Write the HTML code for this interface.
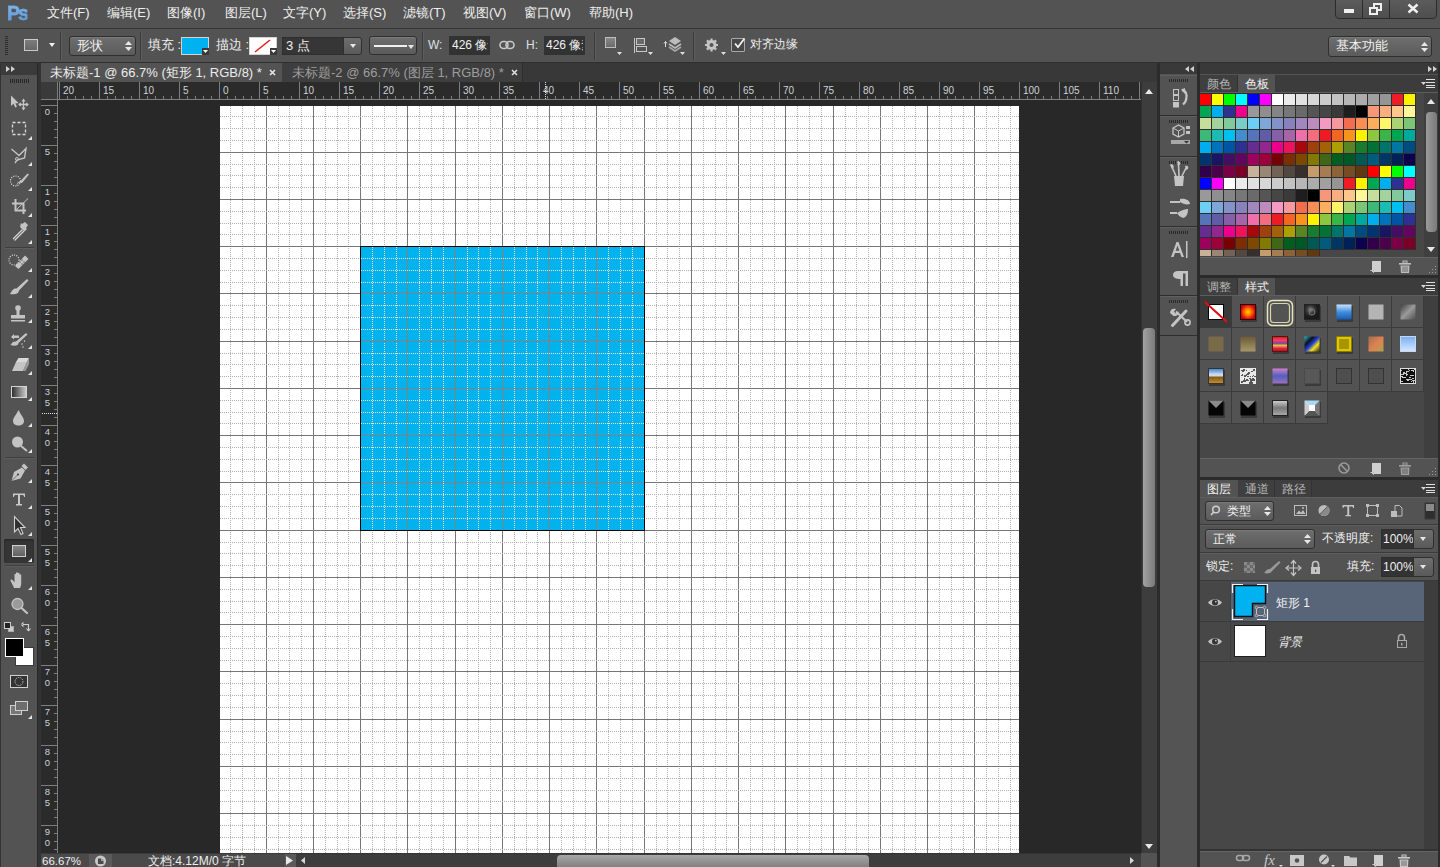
<!DOCTYPE html>
<html><head><meta charset="utf-8"><style>
*{margin:0;padding:0;box-sizing:border-box}
html,body{width:1440px;height:867px;overflow:hidden;background:#535353;font-family:"Liberation Sans",sans-serif;font-size:12px;color:#e6e6e6}
.a{position:absolute}
.t{position:absolute;white-space:nowrap;line-height:1}
svg{position:absolute;overflow:visible}
</style></head><body>
<div class="a" style="left:0px;top:0px;width:1440px;height:28px;background:#535353"></div>
<div class="a" style="left:0px;top:28px;width:1440px;height:1px;background:#343434"></div>
<div class="a" style="left:0px;top:29px;width:1440px;height:33px;background:#535353"></div>
<div class="a" style="left:0px;top:62px;width:1440px;height:1px;background:#2f2f2f"></div>
<div class="t" style="left:7px;top:1px;font:bold 21px 'Liberation Sans',sans-serif;letter-spacing:-2px;transform:scaleX(0.92);transform-origin:left;-webkit-text-stroke:0.5px #6aa2da;color:#6ba3d8;background:linear-gradient(#8cc0f0,#4f8fcf);-webkit-background-clip:text;color:transparent">Ps</div>
<div class="t" style="left:47px;top:6px;font-size:13px;color:#efefef">文件(F)</div>
<div class="t" style="left:107px;top:6px;font-size:13px;color:#efefef">编辑(E)</div>
<div class="t" style="left:167px;top:6px;font-size:13px;color:#efefef">图像(I)</div>
<div class="t" style="left:225px;top:6px;font-size:13px;color:#efefef">图层(L)</div>
<div class="t" style="left:283px;top:6px;font-size:13px;color:#efefef">文字(Y)</div>
<div class="t" style="left:343px;top:6px;font-size:13px;color:#efefef">选择(S)</div>
<div class="t" style="left:403px;top:6px;font-size:13px;color:#efefef">滤镜(T)</div>
<div class="t" style="left:463px;top:6px;font-size:13px;color:#efefef">视图(V)</div>
<div class="t" style="left:524px;top:6px;font-size:13px;color:#efefef">窗口(W)</div>
<div class="t" style="left:589px;top:6px;font-size:13px;color:#efefef">帮助(H)</div>
<div class="a" style="left:1335px;top:-3px;width:102px;height:22px;background:linear-gradient(#5d5d5d,#4e4e4e);border:1px solid #2c2c2c;border-radius:0 0 4px 4px;box-shadow:inset 0 1px 0 #6a6a6a"></div>
<div class="a" style="left:1362px;top:0px;width:1px;height:18px;background:#2c2c2c"></div>
<div class="a" style="left:1389px;top:0px;width:1px;height:18px;background:#2c2c2c"></div>
<div class="a" style="left:1344px;top:9px;width:10px;height:4px;background:#f0f0f0"></div>
<svg style="left:1369px;top:3px" width="14" height="12"><rect x="5" y="1" width="7" height="6" fill="none" stroke="#f0f0f0" stroke-width="2"/><rect x="1" y="5" width="7" height="6" fill="#565656" stroke="#f0f0f0" stroke-width="2"/></svg>
<svg style="left:1407px;top:3px" width="12" height="11"><path d="M1.5 1.5L10.5 9.5M10.5 1.5L1.5 9.5" stroke="#f0f0f0" stroke-width="2.4"/></svg>
<div class="a" style="left:5px;top:36px;width:3px;height:1px;background:#2e2e2e"></div>
<div class="a" style="left:5px;top:38px;width:3px;height:1px;background:#2e2e2e"></div>
<div class="a" style="left:5px;top:40px;width:3px;height:1px;background:#2e2e2e"></div>
<div class="a" style="left:5px;top:42px;width:3px;height:1px;background:#2e2e2e"></div>
<div class="a" style="left:5px;top:44px;width:3px;height:1px;background:#2e2e2e"></div>
<div class="a" style="left:5px;top:46px;width:3px;height:1px;background:#2e2e2e"></div>
<div class="a" style="left:5px;top:48px;width:3px;height:1px;background:#2e2e2e"></div>
<div class="a" style="left:5px;top:50px;width:3px;height:1px;background:#2e2e2e"></div>
<div class="a" style="left:5px;top:52px;width:3px;height:1px;background:#2e2e2e"></div>
<div class="a" style="left:5px;top:54px;width:3px;height:1px;background:#2e2e2e"></div>
<div class="a" style="left:24px;top:39px;width:14px;height:12px;background:linear-gradient(#7c7c7c,#676767);border:1px solid #c9c9c9"></div>
<svg style="left:49px;top:43px" width="6" height="4"><path d="M0 0H6L3 4Z" fill="#f0f0f0"/></svg>
<div class="a" style="left:60px;top:32px;width:1px;height:28px;background:#3a3a3a"></div>
<div class="a" style="left:61px;top:32px;width:1px;height:28px;background:#5e5e5e"></div>
<div class="a" style="left:140px;top:32px;width:1px;height:28px;background:#3a3a3a"></div>
<div class="a" style="left:141px;top:32px;width:1px;height:28px;background:#5e5e5e"></div>
<div class="a" style="left:422px;top:32px;width:1px;height:28px;background:#3a3a3a"></div>
<div class="a" style="left:423px;top:32px;width:1px;height:28px;background:#5e5e5e"></div>
<div class="a" style="left:594px;top:32px;width:1px;height:28px;background:#3a3a3a"></div>
<div class="a" style="left:595px;top:32px;width:1px;height:28px;background:#5e5e5e"></div>
<div class="a" style="left:693px;top:32px;width:1px;height:28px;background:#3a3a3a"></div>
<div class="a" style="left:694px;top:32px;width:1px;height:28px;background:#5e5e5e"></div>
<div class="a" style="left:69px;top:36px;width:67px;height:20px;background:linear-gradient(#6e6e6e,#5b5b5b);border:1px solid #2f2f2f;border-radius:3px;box-shadow:inset 0 1px 0 #7a7a7a"></div>
<div class="t" style="left:77px;top:38.5px;font-size:13px;color:#f2f2f2">形状</div>
<svg style="left:125px;top:41px" width="7" height="10"><path d="M0 4H7L3.5 0Z M0 6H7L3.5 10Z" fill="#e8e8e8"/></svg>
<div class="t" style="left:148px;top:38px;font-size:13px;color:#efefef">填充 :</div>
<div class="a" style="left:181px;top:37px;width:28px;height:18px;background:#00b2ef;border:1px solid #d4d4d4"></div>
<svg style="left:202px;top:48px" width="7" height="7"><rect width="7" height="7" fill="#3a3a3a"/><path d="M1 2H6L3.5 5Z" fill="#fff"/></svg>
<div class="t" style="left:216px;top:38px;font-size:13px;color:#efefef">描边 :</div>
<div class="a" style="left:249px;top:37px;width:28px;height:18px;background:#fff;border:1px solid #d4d4d4"></div>
<svg style="left:249px;top:37px" width="28" height="18"><path d="M6 15L21 3" stroke="#e02020" stroke-width="1.6"/><rect x="21" y="11" width="7" height="7" fill="#3a3a3a"/><path d="M22 13H27L24.5 16Z" fill="#fff"/></svg>
<div class="a" style="left:282px;top:37px;width:62px;height:18px;background:#363636;border:1px solid #2e2e2e"></div>
<div class="t" style="left:286px;top:38.5px;font-size:13px;color:#efefef">3 点</div>
<div class="a" style="left:343px;top:37px;width:19px;height:18px;background:linear-gradient(#6e6e6e,#5a5a5a);border:1px solid #2f2f2f;border-radius:0 3px 3px 0"></div>
<svg style="left:350px;top:44px" width="6" height="4"><path d="M0 0H6L3 4Z" fill="#e8e8e8"/></svg>
<div class="a" style="left:369px;top:36px;width:48px;height:19px;background:linear-gradient(#6e6e6e,#5b5b5b);border:1px solid #2f2f2f;border-radius:3px;box-shadow:inset 0 1px 0 #7a7a7a"></div>
<div class="a" style="left:374px;top:45px;width:33px;height:2px;background:#f0f0f0"></div>
<svg style="left:408px;top:45px" width="6" height="4"><path d="M0 0H6L3 4Z" fill="#e8e8e8"/></svg>
<div class="t" style="left:428px;top:39px;font-size:12px;color:#d8e0e8">W:</div>
<div class="a" style="left:449px;top:36px;width:41px;height:19px;background:#323232"></div>
<div class="t" style="left:452px;top:39px;font-size:12px;color:#f0f0f0;width:36px;overflow:hidden">426 像素</div>
<svg style="left:499px;top:40px" width="17" height="10"><rect x="1" y="1.5" width="8" height="7" rx="3.5" fill="none" stroke="#c8c8c8" stroke-width="1.6"/><rect x="7" y="1.5" width="8" height="7" rx="3.5" fill="none" stroke="#c8c8c8" stroke-width="1.6"/></svg>
<div class="t" style="left:526px;top:39px;font-size:12px;color:#d8e0e8">H:</div>
<div class="a" style="left:544px;top:36px;width:41px;height:19px;background:#323232"></div>
<div class="t" style="left:546px;top:39px;font-size:12px;color:#f0f0f0;width:37px;overflow:hidden">426 像素</div>
<div class="a" style="left:605px;top:37px;width:11px;height:11px;background:linear-gradient(#888,#6a6a6a);border:1px solid #bdbdbd"></div>
<svg style="left:617px;top:52px" width="5" height="3"><path d="M0 0H5L2.5 3Z" fill="#e0e0e0"/></svg>
<div class="a" style="left:634px;top:38px;width:1px;height:15px;background:#c8c8c8"></div>
<div class="a" style="left:636px;top:38px;width:9px;height:7px;background:#6a6a6a;border:1px solid #c8c8c8"></div>
<div class="a" style="left:636px;top:46px;width:11px;height:6px;background:#555;border:1px solid #c8c8c8"></div>
<svg style="left:648px;top:52px" width="5" height="3"><path d="M0 0H5L2.5 3Z" fill="#e0e0e0"/></svg>
<svg style="left:663px;top:36px" width="22" height="18"><path d="M2.5 11V6M1 7.5L2.5 5.5L4 7.5" stroke="#ddd" fill="none" stroke-width="1"/><path d="M6 5L12 1L18 5L12 9Z" fill="#bcbcbc"/><path d="M6 8L12 12L18 8" stroke="#bcbcbc" stroke-width="1.6" fill="none"/><path d="M6 11L12 15L18 11" stroke="#a8a8a8" stroke-width="1.6" fill="none"/></svg>
<svg style="left:680px;top:52px" width="5" height="3"><path d="M0 0H5L2.5 3Z" fill="#e0e0e0"/></svg>
<svg style="left:704px;top:38px" width="15" height="14"><g fill="#c4c4c4"><circle cx="7.5" cy="7" r="5"/><g stroke="#c4c4c4" stroke-width="2.2"><path d="M7.5 0.5V13.5M1 7H14M2.9 2.4L12.1 11.6M12.1 2.4L2.9 11.6"/></g></g><circle cx="7.5" cy="7" r="2" fill="#555"/></svg>
<svg style="left:721px;top:52px" width="5" height="3"><path d="M0 0H5L2.5 3Z" fill="#e0e0e0"/></svg>
<div class="a" style="left:731px;top:38px;width:14px;height:14px;background:#484848;border:1px solid #a8a8a8;border-radius:1px"></div>
<svg style="left:733px;top:37px" width="13" height="13"><path d="M2 6.5L5 10L11.5 1.5" stroke="#f0f0f0" stroke-width="1.8" fill="none"/></svg>
<div class="t" style="left:750px;top:38px;font-size:12px;color:#efefef">对齐边缘</div>
<div class="a" style="left:1328px;top:36px;width:104px;height:21px;background:linear-gradient(#6e6e6e,#5b5b5b);border:1px solid #2f2f2f;border-radius:3px;box-shadow:inset 0 1px 0 #7a7a7a"></div>
<div class="t" style="left:1336px;top:38.5px;font-size:13px;color:#f2f2f2">基本功能</div>
<svg style="left:1421px;top:42px" width="7" height="10"><path d="M0 4H7L3.5 0Z M0 6H7L3.5 10Z" fill="#e8e8e8"/></svg>
<div class="a" style="left:0px;top:63px;width:41px;height:804px;background:#333333"></div>
<div class="a" style="left:1px;top:63px;width:36px;height:12px;background:#3b3b3b"></div>
<div class="a" style="left:1px;top:75px;width:36px;height:792px;background:#535353"></div>
<div class="a" style="left:37px;top:63px;width:1px;height:804px;background:#282828"></div>
<svg style="left:6px;top:66px" width="9" height="6"><path d="M0 0L4 3L0 6Z M5 0L9 3L5 6Z" fill="#d0d0d0"/></svg>
<div class="a" style="left:10px;top:79px;width:1px;height:4px;background:#262626"></div>
<div class="a" style="left:12px;top:79px;width:1px;height:4px;background:#262626"></div>
<div class="a" style="left:14px;top:79px;width:1px;height:4px;background:#262626"></div>
<div class="a" style="left:16px;top:79px;width:1px;height:4px;background:#262626"></div>
<div class="a" style="left:18px;top:79px;width:1px;height:4px;background:#262626"></div>
<div class="a" style="left:20px;top:79px;width:1px;height:4px;background:#262626"></div>
<div class="a" style="left:22px;top:79px;width:1px;height:4px;background:#262626"></div>
<div class="a" style="left:24px;top:79px;width:1px;height:4px;background:#262626"></div>
<div class="a" style="left:26px;top:79px;width:1px;height:4px;background:#262626"></div>
<div class="a" style="left:28px;top:79px;width:1px;height:4px;background:#262626"></div>
<svg style="left:0;top:0" width="41" height="867">
<path d="M11 95.5V106L13.5 103.8L15.2 107.5L17 106.7L15.4 103.2H18.8Z" fill="#c4c4c4"/>
<path d="M23.5 100V109M19 104.5H28" stroke="#c4c4c4" stroke-width="1.3"/><path d="M22 101.5L23.5 99.5L25 101.5M22 107.5L23.5 109.5L25 107.5M21 103L19 104.5L21 106M26 103L28 104.5L26 106" stroke="#c4c4c4" fill="none" stroke-width="1.1"/>
<rect x="12.5" y="122.5" width="13" height="12" fill="none" stroke="#dadada" stroke-width="1.3" stroke-dasharray="3 2"/>
<path d="M28 140H32V136Z" fill="#e6e6e6"/>
<path d="M11.5 149L19 155.5L26 148.5L24.5 158L17 160L15 163" fill="none" stroke="#c4c4c4" stroke-width="1.4"/><circle cx="17" cy="159" r="1.5" fill="none" stroke="#c4c4c4"/>
<path d="M28 166H32V162Z" fill="#e6e6e6"/>
<circle cx="15.5" cy="181" r="5" fill="none" stroke="#dddddd" stroke-width="1.2" stroke-dasharray="1 1.3"/><path d="M16 187C17 183 19 182 22 183L29 174.5L27.5 173.5L20.5 181C17.5 181.5 16.5 184 16 187Z" fill="#c4c4c4"/>
<path d="M28 191H32V187Z" fill="#e6e6e6"/>
<path d="M15.5 199V210.5H26M12 203.5H23.5V214" fill="none" stroke="#c4c4c4" stroke-width="2"/><path d="M15.5 210.5L28 198.5" stroke="#c4c4c4" stroke-width="1"/>
<path d="M28 217H32V213Z" fill="#e6e6e6"/>
<path d="M13 239L22.5 229.5M14.5 240.5L24 231" stroke="#d8d8d8" stroke-width="1.2"/><path d="M20 227L24.5 231.5L27 229L26 228L28 225L25 222L22 224L21 223Z" fill="#c4c4c4"/>
<path d="M28 244H32V240Z" fill="#e6e6e6"/>
<rect x="5" y="247" width="29" height="1" fill="#3e3e3e"/><rect x="5" y="248" width="29" height="1" fill="#5d5d5d"/>
<circle cx="14" cy="260" r="5" fill="none" stroke="#dddddd" stroke-width="1.2" stroke-dasharray="1 1.3"/><path d="M15 266L25 255.5L28.5 259L18.5 269Z" fill="#c4c4c4" transform="rotate(0)"/>
<circle cx="20" cy="262" r="0.8" fill="#666"/><circle cx="22" cy="260" r="0.8" fill="#666"/><circle cx="22" cy="264" r="0.8" fill="#666"/><circle cx="24" cy="262" r="0.8" fill="#666"/>
<path d="M28 272H32V268Z" fill="#e6e6e6"/>
<path d="M10 294C12 291 13 288 16.5 288.5L27 279L28.5 280.5L19 290.5C19 293.5 15 295 10 294Z" fill="#c4c4c4"/>
<path d="M28 298H32V294Z" fill="#e6e6e6"/>
<circle cx="18" cy="308" r="2.8" fill="#c4c4c4"/><rect x="16.5" y="309" width="3" height="6" fill="#c4c4c4"/><rect x="11" y="315" width="14" height="3.5" fill="#c4c4c4"/><rect x="11" y="320" width="14" height="1.5" fill="#c4c4c4"/>
<path d="M28 323H32V319Z" fill="#e6e6e6"/>
<path d="M11 337L14 334V335.5H19V338H14V339.5Z" fill="#c4c4c4"/><path d="M10.5 345C12 343 13 341 16 341.5L26 333L27.5 334.5L18.5 343C18.5 345.5 15 346.5 10.5 345Z" fill="#c4c4c4"/><circle cx="22" cy="344" r="0.7" fill="#ddd"/><circle cx="24.5" cy="341" r="0.7" fill="#ddd"/><circle cx="23" cy="347" r="0.7" fill="#ddd"/>
<path d="M28 349H32V345Z" fill="#e6e6e6"/>
<path d="M12 371L16 362H27L23 371Z" fill="#c4c4c4"/><path d="M16 362L18.5 358H29L27 362Z" fill="#d8d8d8"/><path d="M23 371L27 362L29 358V364L25.5 371Z" fill="#9a9a9a"/>
<path d="M28 375H32V371Z" fill="#e6e6e6"/>
<defs><linearGradient id="gr" x1="0" x2="1"><stop offset="0" stop-color="#2a2a2a"/><stop offset="1" stop-color="#d0d0d0"/></linearGradient><linearGradient id="gq" x1="0" x2="0" y1="0" y2="1"><stop offset="0" stop-color="#888"/><stop offset="1" stop-color="#5e5e5e"/></linearGradient></defs>
<rect x="11.5" y="386.5" width="15" height="11" fill="url(#gr)" stroke="#d4d4d4"/>
<path d="M28 401H32V397Z" fill="#e6e6e6"/>
<path d="M18.5 410C16 415 13 418 13 421C13 424 15.5 425.5 18.5 425.5C21.5 425.5 24 424 24 421C24 418 21 415 18.5 410Z" fill="#c4c4c4"/>
<path d="M28 427H32V423Z" fill="#e6e6e6"/>
<circle cx="17.5" cy="442" r="5.5" fill="#c4c4c4"/><path d="M21 446L27 451" stroke="#c4c4c4" stroke-width="2"/>
<path d="M28 453H32V449Z" fill="#e6e6e6"/>
<rect x="5" y="457" width="29" height="1" fill="#3e3e3e"/><rect x="5" y="458" width="29" height="1" fill="#5d5d5d"/>
<path d="M11.5 481L14 472L22 467.5L25 470.5L20.5 478.5Z" fill="#c4c4c4"/><path d="M21.5 466L24 463.5L28 467.5L25.5 470Z" fill="#c4c4c4"/><circle cx="18" cy="474.5" r="1" fill="#333"/><path d="M11.5 481L18 474.5" stroke="#555" stroke-width="0.7"/>
<path d="M28 483H32V479Z" fill="#e6e6e6"/>
<path d="M13 493.5H25V497H24C24 495.5 23.5 495 22 495H20V504H22V505.5H16V504H18V495H16C14.5 495 14 495.5 14 497H13Z" fill="#c8c8c8"/>
<path d="M28 509H32V505Z" fill="#e6e6e6"/>
<path d="M14.5 516.5V532L18 528.5L21 534.5L23 533.5L20.5 527.5H25Z" fill="#2f2f2f" stroke="#cfcfcf" stroke-width="1.1"/>
<path d="M28 536H32V532Z" fill="#e6e6e6"/>
</svg>
<div class="a" style="left:4px;top:539px;width:30px;height:24px;background:#353535;border-radius:2px;box-shadow:inset 0 1px 2px #222"></div>
<svg style="left:0;top:0" width="41" height="867"><rect x="12.5" y="545.5" width="13" height="11" fill="url(#gq)" stroke="#d0d0d0"/><path d="M28 562H32V558Z" fill="#e6e6e6"/><rect x="5" y="565" width="29" height="1" fill="#3e3e3e"/><rect x="5" y="566" width="29" height="1" fill="#5d5d5d"/><path d="M14 588C13 585 11 582 10.5 580.5C10.5 579.5 11.5 579 12.5 580L14.5 582.5V574.5C14.5 573.5 16 573.5 16 574.5V580V573C16 572 17.8 572 17.8 573V580V573.5C17.8 572.5 19.5 572.5 19.5 573.5V580.5V575C19.5 574 21.2 574 21.2 575V583C21.2 585.5 20.5 587 20 588Z" fill="#c4c4c4"/><path d="M28 590H32V586Z" fill="#e6e6e6"/><circle cx="17.5" cy="604" r="5.5" fill="#9a9a9a" stroke="#c4c4c4" stroke-width="1.3"/><path d="M21.5 608L27 613" stroke="#c4c4c4" stroke-width="2.2" stroke-linecap="round"/><rect x="8.5" y="626.5" width="5" height="5" fill="#ccc" stroke="#aaa"/><rect x="4.5" y="622.5" width="6" height="6" fill="#222" stroke="#ccc"/><path d="M23 624.5H28.5V630M21.5 624.5L23.5 622.5M21.5 624.5L23.5 626.5M26.5 628.5L28.5 631M30.5 628.5L28.5 631" fill="none" stroke="#d0d0d0" stroke-width="1.1"/><rect x="15.5" y="647.5" width="18" height="18" fill="#fff" stroke="#3a3a3a"/><rect x="5.5" y="638.5" width="18" height="18" fill="#000" stroke="#fff"/><rect x="10.5" y="675.5" width="17" height="12" fill="#333" stroke="#cfcfcf"/><circle cx="19" cy="681.5" r="4" fill="none" stroke="#e0e0e0" stroke-dasharray="1 1.2"/><rect x="10.5" y="705.5" width="11" height="9" fill="#777" stroke="#d0d0d0"/><rect x="15.5" y="701.5" width="12" height="9" fill="#6e6e6e" stroke="#d0d0d0"/><path d="M28 719H32V715Z" fill="#e6e6e6"/></svg>
<div class="a" style="left:41px;top:63px;width:1116px;height:19px;background:#383838"></div>
<div class="a" style="left:41px;top:63px;width:241px;height:19px;background:#535353"></div>
<div class="a" style="left:282px;top:63px;width:241px;height:19px;background:#3e3e3e;border-right:1px solid #2c2c2c"></div>
<div class="t" style="left:50px;top:66px;font-size:13px;color:#ececec">未标题-1 @ 66.7% (矩形 1, RGB/8) *</div>
<svg style="left:269px;top:69px" width="7" height="7"><path d="M1 1L6 6M6 1L1 6" stroke="#e8e8e8" stroke-width="1.6"/></svg>
<div class="t" style="left:292px;top:66px;font-size:13px;color:#9d9d9d">未标题-2 @ 66.7% (图层 1, RGB/8) *</div>
<svg style="left:511px;top:69px" width="7" height="7"><path d="M1 1L6 6M6 1L1 6" stroke="#e0e0e0" stroke-width="1.6"/></svg>
<div class="a" style="left:41px;top:82px;width:1100px;height:18px;background:#2b2b2b"></div>
<div class="a" style="left:41px;top:100px;width:17px;height:753px;background:#2b2b2b"></div>
<div class="a" style="left:58px;top:100px;width:1083px;height:753px;background:#282828"></div>
<div class="a" style="left:41px;top:82px;width:16px;height:17px;background:#3a3a3a"></div>
<svg style="left:0;top:0" width="1440" height="867" shape-rendering="crispEdges">
<rect x="41" y="99" width="1100" height="1" fill="#7e7e7e"/>
<rect x="57" y="82" width="1" height="771" fill="#7e7e7e"/>
<rect x="59" y="82" width="1" height="17" fill="#7e7e7e"/>
<rect x="67" y="96" width="1" height="3" fill="#7e7e7e"/>
<rect x="75" y="96" width="1" height="3" fill="#7e7e7e"/>
<rect x="83" y="96" width="1" height="3" fill="#7e7e7e"/>
<rect x="91" y="96" width="1" height="3" fill="#7e7e7e"/>
<rect x="99" y="82" width="1" height="17" fill="#7e7e7e"/>
<rect x="107" y="96" width="1" height="3" fill="#7e7e7e"/>
<rect x="115" y="96" width="1" height="3" fill="#7e7e7e"/>
<rect x="123" y="96" width="1" height="3" fill="#7e7e7e"/>
<rect x="131" y="96" width="1" height="3" fill="#7e7e7e"/>
<rect x="139" y="82" width="1" height="17" fill="#7e7e7e"/>
<rect x="147" y="96" width="1" height="3" fill="#7e7e7e"/>
<rect x="155" y="96" width="1" height="3" fill="#7e7e7e"/>
<rect x="163" y="96" width="1" height="3" fill="#7e7e7e"/>
<rect x="171" y="96" width="1" height="3" fill="#7e7e7e"/>
<rect x="179" y="82" width="1" height="17" fill="#7e7e7e"/>
<rect x="187" y="96" width="1" height="3" fill="#7e7e7e"/>
<rect x="195" y="96" width="1" height="3" fill="#7e7e7e"/>
<rect x="203" y="96" width="1" height="3" fill="#7e7e7e"/>
<rect x="211" y="96" width="1" height="3" fill="#7e7e7e"/>
<rect x="219" y="82" width="1" height="17" fill="#7e7e7e"/>
<rect x="227" y="96" width="1" height="3" fill="#7e7e7e"/>
<rect x="235" y="96" width="1" height="3" fill="#7e7e7e"/>
<rect x="243" y="96" width="1" height="3" fill="#7e7e7e"/>
<rect x="251" y="96" width="1" height="3" fill="#7e7e7e"/>
<rect x="259" y="82" width="1" height="17" fill="#7e7e7e"/>
<rect x="267" y="96" width="1" height="3" fill="#7e7e7e"/>
<rect x="275" y="96" width="1" height="3" fill="#7e7e7e"/>
<rect x="283" y="96" width="1" height="3" fill="#7e7e7e"/>
<rect x="291" y="96" width="1" height="3" fill="#7e7e7e"/>
<rect x="299" y="82" width="1" height="17" fill="#7e7e7e"/>
<rect x="307" y="96" width="1" height="3" fill="#7e7e7e"/>
<rect x="315" y="96" width="1" height="3" fill="#7e7e7e"/>
<rect x="323" y="96" width="1" height="3" fill="#7e7e7e"/>
<rect x="331" y="96" width="1" height="3" fill="#7e7e7e"/>
<rect x="339" y="82" width="1" height="17" fill="#7e7e7e"/>
<rect x="347" y="96" width="1" height="3" fill="#7e7e7e"/>
<rect x="355" y="96" width="1" height="3" fill="#7e7e7e"/>
<rect x="363" y="96" width="1" height="3" fill="#7e7e7e"/>
<rect x="371" y="96" width="1" height="3" fill="#7e7e7e"/>
<rect x="379" y="82" width="1" height="17" fill="#7e7e7e"/>
<rect x="387" y="96" width="1" height="3" fill="#7e7e7e"/>
<rect x="395" y="96" width="1" height="3" fill="#7e7e7e"/>
<rect x="403" y="96" width="1" height="3" fill="#7e7e7e"/>
<rect x="411" y="96" width="1" height="3" fill="#7e7e7e"/>
<rect x="419" y="82" width="1" height="17" fill="#7e7e7e"/>
<rect x="427" y="96" width="1" height="3" fill="#7e7e7e"/>
<rect x="435" y="96" width="1" height="3" fill="#7e7e7e"/>
<rect x="443" y="96" width="1" height="3" fill="#7e7e7e"/>
<rect x="451" y="96" width="1" height="3" fill="#7e7e7e"/>
<rect x="459" y="82" width="1" height="17" fill="#7e7e7e"/>
<rect x="467" y="96" width="1" height="3" fill="#7e7e7e"/>
<rect x="475" y="96" width="1" height="3" fill="#7e7e7e"/>
<rect x="483" y="96" width="1" height="3" fill="#7e7e7e"/>
<rect x="491" y="96" width="1" height="3" fill="#7e7e7e"/>
<rect x="499" y="82" width="1" height="17" fill="#7e7e7e"/>
<rect x="507" y="96" width="1" height="3" fill="#7e7e7e"/>
<rect x="515" y="96" width="1" height="3" fill="#7e7e7e"/>
<rect x="523" y="96" width="1" height="3" fill="#7e7e7e"/>
<rect x="531" y="96" width="1" height="3" fill="#7e7e7e"/>
<rect x="539" y="82" width="1" height="17" fill="#7e7e7e"/>
<rect x="547" y="96" width="1" height="3" fill="#7e7e7e"/>
<rect x="555" y="96" width="1" height="3" fill="#7e7e7e"/>
<rect x="563" y="96" width="1" height="3" fill="#7e7e7e"/>
<rect x="571" y="96" width="1" height="3" fill="#7e7e7e"/>
<rect x="579" y="82" width="1" height="17" fill="#7e7e7e"/>
<rect x="587" y="96" width="1" height="3" fill="#7e7e7e"/>
<rect x="595" y="96" width="1" height="3" fill="#7e7e7e"/>
<rect x="603" y="96" width="1" height="3" fill="#7e7e7e"/>
<rect x="611" y="96" width="1" height="3" fill="#7e7e7e"/>
<rect x="619" y="82" width="1" height="17" fill="#7e7e7e"/>
<rect x="627" y="96" width="1" height="3" fill="#7e7e7e"/>
<rect x="635" y="96" width="1" height="3" fill="#7e7e7e"/>
<rect x="643" y="96" width="1" height="3" fill="#7e7e7e"/>
<rect x="651" y="96" width="1" height="3" fill="#7e7e7e"/>
<rect x="659" y="82" width="1" height="17" fill="#7e7e7e"/>
<rect x="667" y="96" width="1" height="3" fill="#7e7e7e"/>
<rect x="675" y="96" width="1" height="3" fill="#7e7e7e"/>
<rect x="683" y="96" width="1" height="3" fill="#7e7e7e"/>
<rect x="691" y="96" width="1" height="3" fill="#7e7e7e"/>
<rect x="699" y="82" width="1" height="17" fill="#7e7e7e"/>
<rect x="707" y="96" width="1" height="3" fill="#7e7e7e"/>
<rect x="715" y="96" width="1" height="3" fill="#7e7e7e"/>
<rect x="723" y="96" width="1" height="3" fill="#7e7e7e"/>
<rect x="731" y="96" width="1" height="3" fill="#7e7e7e"/>
<rect x="739" y="82" width="1" height="17" fill="#7e7e7e"/>
<rect x="747" y="96" width="1" height="3" fill="#7e7e7e"/>
<rect x="755" y="96" width="1" height="3" fill="#7e7e7e"/>
<rect x="763" y="96" width="1" height="3" fill="#7e7e7e"/>
<rect x="771" y="96" width="1" height="3" fill="#7e7e7e"/>
<rect x="779" y="82" width="1" height="17" fill="#7e7e7e"/>
<rect x="787" y="96" width="1" height="3" fill="#7e7e7e"/>
<rect x="795" y="96" width="1" height="3" fill="#7e7e7e"/>
<rect x="803" y="96" width="1" height="3" fill="#7e7e7e"/>
<rect x="811" y="96" width="1" height="3" fill="#7e7e7e"/>
<rect x="819" y="82" width="1" height="17" fill="#7e7e7e"/>
<rect x="827" y="96" width="1" height="3" fill="#7e7e7e"/>
<rect x="835" y="96" width="1" height="3" fill="#7e7e7e"/>
<rect x="843" y="96" width="1" height="3" fill="#7e7e7e"/>
<rect x="851" y="96" width="1" height="3" fill="#7e7e7e"/>
<rect x="859" y="82" width="1" height="17" fill="#7e7e7e"/>
<rect x="867" y="96" width="1" height="3" fill="#7e7e7e"/>
<rect x="875" y="96" width="1" height="3" fill="#7e7e7e"/>
<rect x="883" y="96" width="1" height="3" fill="#7e7e7e"/>
<rect x="891" y="96" width="1" height="3" fill="#7e7e7e"/>
<rect x="899" y="82" width="1" height="17" fill="#7e7e7e"/>
<rect x="907" y="96" width="1" height="3" fill="#7e7e7e"/>
<rect x="915" y="96" width="1" height="3" fill="#7e7e7e"/>
<rect x="923" y="96" width="1" height="3" fill="#7e7e7e"/>
<rect x="931" y="96" width="1" height="3" fill="#7e7e7e"/>
<rect x="939" y="82" width="1" height="17" fill="#7e7e7e"/>
<rect x="947" y="96" width="1" height="3" fill="#7e7e7e"/>
<rect x="955" y="96" width="1" height="3" fill="#7e7e7e"/>
<rect x="963" y="96" width="1" height="3" fill="#7e7e7e"/>
<rect x="971" y="96" width="1" height="3" fill="#7e7e7e"/>
<rect x="979" y="82" width="1" height="17" fill="#7e7e7e"/>
<rect x="987" y="96" width="1" height="3" fill="#7e7e7e"/>
<rect x="995" y="96" width="1" height="3" fill="#7e7e7e"/>
<rect x="1003" y="96" width="1" height="3" fill="#7e7e7e"/>
<rect x="1011" y="96" width="1" height="3" fill="#7e7e7e"/>
<rect x="1019" y="82" width="1" height="17" fill="#7e7e7e"/>
<rect x="1027" y="96" width="1" height="3" fill="#7e7e7e"/>
<rect x="1035" y="96" width="1" height="3" fill="#7e7e7e"/>
<rect x="1043" y="96" width="1" height="3" fill="#7e7e7e"/>
<rect x="1051" y="96" width="1" height="3" fill="#7e7e7e"/>
<rect x="1059" y="82" width="1" height="17" fill="#7e7e7e"/>
<rect x="1067" y="96" width="1" height="3" fill="#7e7e7e"/>
<rect x="1075" y="96" width="1" height="3" fill="#7e7e7e"/>
<rect x="1083" y="96" width="1" height="3" fill="#7e7e7e"/>
<rect x="1091" y="96" width="1" height="3" fill="#7e7e7e"/>
<rect x="1099" y="82" width="1" height="17" fill="#7e7e7e"/>
<rect x="1107" y="96" width="1" height="3" fill="#7e7e7e"/>
<rect x="1115" y="96" width="1" height="3" fill="#7e7e7e"/>
<rect x="1123" y="96" width="1" height="3" fill="#7e7e7e"/>
<rect x="1131" y="96" width="1" height="3" fill="#7e7e7e"/>
<rect x="1139" y="82" width="1" height="17" fill="#7e7e7e"/>
<rect x="41" y="105" width="16" height="1" fill="#7e7e7e"/>
<rect x="54" y="113" width="3" height="1" fill="#7e7e7e"/>
<rect x="54" y="121" width="3" height="1" fill="#7e7e7e"/>
<rect x="54" y="129" width="3" height="1" fill="#7e7e7e"/>
<rect x="54" y="137" width="3" height="1" fill="#7e7e7e"/>
<rect x="41" y="145" width="16" height="1" fill="#7e7e7e"/>
<rect x="54" y="153" width="3" height="1" fill="#7e7e7e"/>
<rect x="54" y="161" width="3" height="1" fill="#7e7e7e"/>
<rect x="54" y="169" width="3" height="1" fill="#7e7e7e"/>
<rect x="54" y="177" width="3" height="1" fill="#7e7e7e"/>
<rect x="41" y="185" width="16" height="1" fill="#7e7e7e"/>
<rect x="54" y="193" width="3" height="1" fill="#7e7e7e"/>
<rect x="54" y="201" width="3" height="1" fill="#7e7e7e"/>
<rect x="54" y="209" width="3" height="1" fill="#7e7e7e"/>
<rect x="54" y="217" width="3" height="1" fill="#7e7e7e"/>
<rect x="41" y="225" width="16" height="1" fill="#7e7e7e"/>
<rect x="54" y="233" width="3" height="1" fill="#7e7e7e"/>
<rect x="54" y="241" width="3" height="1" fill="#7e7e7e"/>
<rect x="54" y="249" width="3" height="1" fill="#7e7e7e"/>
<rect x="54" y="257" width="3" height="1" fill="#7e7e7e"/>
<rect x="41" y="265" width="16" height="1" fill="#7e7e7e"/>
<rect x="54" y="273" width="3" height="1" fill="#7e7e7e"/>
<rect x="54" y="281" width="3" height="1" fill="#7e7e7e"/>
<rect x="54" y="289" width="3" height="1" fill="#7e7e7e"/>
<rect x="54" y="297" width="3" height="1" fill="#7e7e7e"/>
<rect x="41" y="305" width="16" height="1" fill="#7e7e7e"/>
<rect x="54" y="313" width="3" height="1" fill="#7e7e7e"/>
<rect x="54" y="321" width="3" height="1" fill="#7e7e7e"/>
<rect x="54" y="329" width="3" height="1" fill="#7e7e7e"/>
<rect x="54" y="337" width="3" height="1" fill="#7e7e7e"/>
<rect x="41" y="345" width="16" height="1" fill="#7e7e7e"/>
<rect x="54" y="353" width="3" height="1" fill="#7e7e7e"/>
<rect x="54" y="361" width="3" height="1" fill="#7e7e7e"/>
<rect x="54" y="369" width="3" height="1" fill="#7e7e7e"/>
<rect x="54" y="377" width="3" height="1" fill="#7e7e7e"/>
<rect x="41" y="385" width="16" height="1" fill="#7e7e7e"/>
<rect x="54" y="393" width="3" height="1" fill="#7e7e7e"/>
<rect x="54" y="401" width="3" height="1" fill="#7e7e7e"/>
<rect x="54" y="409" width="3" height="1" fill="#7e7e7e"/>
<rect x="54" y="417" width="3" height="1" fill="#7e7e7e"/>
<rect x="41" y="425" width="16" height="1" fill="#7e7e7e"/>
<rect x="54" y="433" width="3" height="1" fill="#7e7e7e"/>
<rect x="54" y="441" width="3" height="1" fill="#7e7e7e"/>
<rect x="54" y="449" width="3" height="1" fill="#7e7e7e"/>
<rect x="54" y="457" width="3" height="1" fill="#7e7e7e"/>
<rect x="41" y="465" width="16" height="1" fill="#7e7e7e"/>
<rect x="54" y="473" width="3" height="1" fill="#7e7e7e"/>
<rect x="54" y="481" width="3" height="1" fill="#7e7e7e"/>
<rect x="54" y="489" width="3" height="1" fill="#7e7e7e"/>
<rect x="54" y="497" width="3" height="1" fill="#7e7e7e"/>
<rect x="41" y="505" width="16" height="1" fill="#7e7e7e"/>
<rect x="54" y="513" width="3" height="1" fill="#7e7e7e"/>
<rect x="54" y="521" width="3" height="1" fill="#7e7e7e"/>
<rect x="54" y="529" width="3" height="1" fill="#7e7e7e"/>
<rect x="54" y="537" width="3" height="1" fill="#7e7e7e"/>
<rect x="41" y="545" width="16" height="1" fill="#7e7e7e"/>
<rect x="54" y="553" width="3" height="1" fill="#7e7e7e"/>
<rect x="54" y="561" width="3" height="1" fill="#7e7e7e"/>
<rect x="54" y="569" width="3" height="1" fill="#7e7e7e"/>
<rect x="54" y="577" width="3" height="1" fill="#7e7e7e"/>
<rect x="41" y="585" width="16" height="1" fill="#7e7e7e"/>
<rect x="54" y="593" width="3" height="1" fill="#7e7e7e"/>
<rect x="54" y="601" width="3" height="1" fill="#7e7e7e"/>
<rect x="54" y="609" width="3" height="1" fill="#7e7e7e"/>
<rect x="54" y="617" width="3" height="1" fill="#7e7e7e"/>
<rect x="41" y="625" width="16" height="1" fill="#7e7e7e"/>
<rect x="54" y="633" width="3" height="1" fill="#7e7e7e"/>
<rect x="54" y="641" width="3" height="1" fill="#7e7e7e"/>
<rect x="54" y="649" width="3" height="1" fill="#7e7e7e"/>
<rect x="54" y="657" width="3" height="1" fill="#7e7e7e"/>
<rect x="41" y="665" width="16" height="1" fill="#7e7e7e"/>
<rect x="54" y="673" width="3" height="1" fill="#7e7e7e"/>
<rect x="54" y="681" width="3" height="1" fill="#7e7e7e"/>
<rect x="54" y="689" width="3" height="1" fill="#7e7e7e"/>
<rect x="54" y="697" width="3" height="1" fill="#7e7e7e"/>
<rect x="41" y="705" width="16" height="1" fill="#7e7e7e"/>
<rect x="54" y="713" width="3" height="1" fill="#7e7e7e"/>
<rect x="54" y="721" width="3" height="1" fill="#7e7e7e"/>
<rect x="54" y="729" width="3" height="1" fill="#7e7e7e"/>
<rect x="54" y="737" width="3" height="1" fill="#7e7e7e"/>
<rect x="41" y="745" width="16" height="1" fill="#7e7e7e"/>
<rect x="54" y="753" width="3" height="1" fill="#7e7e7e"/>
<rect x="54" y="761" width="3" height="1" fill="#7e7e7e"/>
<rect x="54" y="769" width="3" height="1" fill="#7e7e7e"/>
<rect x="54" y="777" width="3" height="1" fill="#7e7e7e"/>
<rect x="41" y="785" width="16" height="1" fill="#7e7e7e"/>
<rect x="54" y="793" width="3" height="1" fill="#7e7e7e"/>
<rect x="54" y="801" width="3" height="1" fill="#7e7e7e"/>
<rect x="54" y="809" width="3" height="1" fill="#7e7e7e"/>
<rect x="54" y="817" width="3" height="1" fill="#7e7e7e"/>
<rect x="41" y="825" width="16" height="1" fill="#7e7e7e"/>
<rect x="54" y="833" width="3" height="1" fill="#7e7e7e"/>
<rect x="54" y="841" width="3" height="1" fill="#7e7e7e"/>
<rect x="54" y="849" width="3" height="1" fill="#7e7e7e"/>
<path d="M545.5 82V99" stroke="#e0e0e0" stroke-dasharray="1 1"/><path d="M42 413.5H57" stroke="#e0e0e0" stroke-dasharray="1 1"/>
</svg>
<div class="t" style="left:63px;top:85.5px;font-size:10px;color:#cdd2d8">20</div>
<div class="t" style="left:103px;top:85.5px;font-size:10px;color:#cdd2d8">15</div>
<div class="t" style="left:143px;top:85.5px;font-size:10px;color:#cdd2d8">10</div>
<div class="t" style="left:183px;top:85.5px;font-size:10px;color:#cdd2d8">5</div>
<div class="t" style="left:223px;top:85.5px;font-size:10px;color:#cdd2d8">0</div>
<div class="t" style="left:263px;top:85.5px;font-size:10px;color:#cdd2d8">5</div>
<div class="t" style="left:303px;top:85.5px;font-size:10px;color:#cdd2d8">10</div>
<div class="t" style="left:343px;top:85.5px;font-size:10px;color:#cdd2d8">15</div>
<div class="t" style="left:383px;top:85.5px;font-size:10px;color:#cdd2d8">20</div>
<div class="t" style="left:423px;top:85.5px;font-size:10px;color:#cdd2d8">25</div>
<div class="t" style="left:463px;top:85.5px;font-size:10px;color:#cdd2d8">30</div>
<div class="t" style="left:503px;top:85.5px;font-size:10px;color:#cdd2d8">35</div>
<div class="t" style="left:543px;top:85.5px;font-size:10px;color:#cdd2d8">40</div>
<div class="t" style="left:583px;top:85.5px;font-size:10px;color:#cdd2d8">45</div>
<div class="t" style="left:623px;top:85.5px;font-size:10px;color:#cdd2d8">50</div>
<div class="t" style="left:663px;top:85.5px;font-size:10px;color:#cdd2d8">55</div>
<div class="t" style="left:703px;top:85.5px;font-size:10px;color:#cdd2d8">60</div>
<div class="t" style="left:743px;top:85.5px;font-size:10px;color:#cdd2d8">65</div>
<div class="t" style="left:783px;top:85.5px;font-size:10px;color:#cdd2d8">70</div>
<div class="t" style="left:823px;top:85.5px;font-size:10px;color:#cdd2d8">75</div>
<div class="t" style="left:863px;top:85.5px;font-size:10px;color:#cdd2d8">80</div>
<div class="t" style="left:903px;top:85.5px;font-size:10px;color:#cdd2d8">85</div>
<div class="t" style="left:943px;top:85.5px;font-size:10px;color:#cdd2d8">90</div>
<div class="t" style="left:983px;top:85.5px;font-size:10px;color:#cdd2d8">95</div>
<div class="t" style="left:1023px;top:85.5px;font-size:10px;color:#cdd2d8">100</div>
<div class="t" style="left:1063px;top:85.5px;font-size:10px;color:#cdd2d8">105</div>
<div class="t" style="left:1103px;top:85.5px;font-size:10px;color:#cdd2d8">110</div>
<div class="t" style="left:1143px;top:85.5px;font-size:10px;color:#cdd2d8">115</div>
<div class="t" style="left:43.5px;top:107px;font-size:9.5px;line-height:10.5px;color:#cdd2d8;width:8px;text-align:center;white-space:normal;word-break:break-all">0</div>
<div class="t" style="left:43.5px;top:147px;font-size:9.5px;line-height:10.5px;color:#cdd2d8;width:8px;text-align:center;white-space:normal;word-break:break-all">5</div>
<div class="t" style="left:43.5px;top:187px;font-size:9.5px;line-height:10.5px;color:#cdd2d8;width:8px;text-align:center;white-space:normal;word-break:break-all">10</div>
<div class="t" style="left:43.5px;top:227px;font-size:9.5px;line-height:10.5px;color:#cdd2d8;width:8px;text-align:center;white-space:normal;word-break:break-all">15</div>
<div class="t" style="left:43.5px;top:267px;font-size:9.5px;line-height:10.5px;color:#cdd2d8;width:8px;text-align:center;white-space:normal;word-break:break-all">20</div>
<div class="t" style="left:43.5px;top:307px;font-size:9.5px;line-height:10.5px;color:#cdd2d8;width:8px;text-align:center;white-space:normal;word-break:break-all">25</div>
<div class="t" style="left:43.5px;top:347px;font-size:9.5px;line-height:10.5px;color:#cdd2d8;width:8px;text-align:center;white-space:normal;word-break:break-all">30</div>
<div class="t" style="left:43.5px;top:387px;font-size:9.5px;line-height:10.5px;color:#cdd2d8;width:8px;text-align:center;white-space:normal;word-break:break-all">35</div>
<div class="t" style="left:43.5px;top:427px;font-size:9.5px;line-height:10.5px;color:#cdd2d8;width:8px;text-align:center;white-space:normal;word-break:break-all">40</div>
<div class="t" style="left:43.5px;top:467px;font-size:9.5px;line-height:10.5px;color:#cdd2d8;width:8px;text-align:center;white-space:normal;word-break:break-all">45</div>
<div class="t" style="left:43.5px;top:507px;font-size:9.5px;line-height:10.5px;color:#cdd2d8;width:8px;text-align:center;white-space:normal;word-break:break-all">50</div>
<div class="t" style="left:43.5px;top:547px;font-size:9.5px;line-height:10.5px;color:#cdd2d8;width:8px;text-align:center;white-space:normal;word-break:break-all">55</div>
<div class="t" style="left:43.5px;top:587px;font-size:9.5px;line-height:10.5px;color:#cdd2d8;width:8px;text-align:center;white-space:normal;word-break:break-all">60</div>
<div class="t" style="left:43.5px;top:627px;font-size:9.5px;line-height:10.5px;color:#cdd2d8;width:8px;text-align:center;white-space:normal;word-break:break-all">65</div>
<div class="t" style="left:43.5px;top:667px;font-size:9.5px;line-height:10.5px;color:#cdd2d8;width:8px;text-align:center;white-space:normal;word-break:break-all">70</div>
<div class="t" style="left:43.5px;top:707px;font-size:9.5px;line-height:10.5px;color:#cdd2d8;width:8px;text-align:center;white-space:normal;word-break:break-all">75</div>
<div class="t" style="left:43.5px;top:747px;font-size:9.5px;line-height:10.5px;color:#cdd2d8;width:8px;text-align:center;white-space:normal;word-break:break-all">80</div>
<div class="t" style="left:43.5px;top:787px;font-size:9.5px;line-height:10.5px;color:#cdd2d8;width:8px;text-align:center;white-space:normal;word-break:break-all">85</div>
<div class="t" style="left:43.5px;top:827px;font-size:9.5px;line-height:10.5px;color:#cdd2d8;width:8px;text-align:center;white-space:normal;word-break:break-all">90</div>
<svg style="left:0;top:0" width="1440" height="867" shape-rendering="crispEdges">
<rect x="220" y="106" width="799" height="747" fill="#fff"/>
<line x1="230.5" y1="106" x2="230.5" y2="853" stroke="#b1b1b1" stroke-dasharray="1 1"/>
<line x1="242.5" y1="106" x2="242.5" y2="853" stroke="#b1b1b1" stroke-dasharray="1 1"/>
<line x1="254.5" y1="106" x2="254.5" y2="853" stroke="#b1b1b1" stroke-dasharray="1 1"/>
<line x1="266.5" y1="106" x2="266.5" y2="853" stroke="#767676"/>
<line x1="278.5" y1="106" x2="278.5" y2="853" stroke="#b1b1b1" stroke-dasharray="1 1"/>
<line x1="289.5" y1="106" x2="289.5" y2="853" stroke="#b1b1b1" stroke-dasharray="1 1"/>
<line x1="301.5" y1="106" x2="301.5" y2="853" stroke="#b1b1b1" stroke-dasharray="1 1"/>
<line x1="313.5" y1="106" x2="313.5" y2="853" stroke="#767676"/>
<line x1="325.5" y1="106" x2="325.5" y2="853" stroke="#b1b1b1" stroke-dasharray="1 1"/>
<line x1="337.5" y1="106" x2="337.5" y2="853" stroke="#b1b1b1" stroke-dasharray="1 1"/>
<line x1="348.5" y1="106" x2="348.5" y2="853" stroke="#b1b1b1" stroke-dasharray="1 1"/>
<line x1="360.5" y1="106" x2="360.5" y2="853" stroke="#767676"/>
<line x1="372.5" y1="106" x2="372.5" y2="853" stroke="#b1b1b1" stroke-dasharray="1 1"/>
<line x1="384.5" y1="106" x2="384.5" y2="853" stroke="#b1b1b1" stroke-dasharray="1 1"/>
<line x1="396.5" y1="106" x2="396.5" y2="853" stroke="#b1b1b1" stroke-dasharray="1 1"/>
<line x1="407.5" y1="106" x2="407.5" y2="853" stroke="#767676"/>
<line x1="419.5" y1="106" x2="419.5" y2="853" stroke="#b1b1b1" stroke-dasharray="1 1"/>
<line x1="431.5" y1="106" x2="431.5" y2="853" stroke="#b1b1b1" stroke-dasharray="1 1"/>
<line x1="443.5" y1="106" x2="443.5" y2="853" stroke="#b1b1b1" stroke-dasharray="1 1"/>
<line x1="455.5" y1="106" x2="455.5" y2="853" stroke="#767676"/>
<line x1="467.5" y1="106" x2="467.5" y2="853" stroke="#b1b1b1" stroke-dasharray="1 1"/>
<line x1="478.5" y1="106" x2="478.5" y2="853" stroke="#b1b1b1" stroke-dasharray="1 1"/>
<line x1="490.5" y1="106" x2="490.5" y2="853" stroke="#b1b1b1" stroke-dasharray="1 1"/>
<line x1="502.5" y1="106" x2="502.5" y2="853" stroke="#767676"/>
<line x1="514.5" y1="106" x2="514.5" y2="853" stroke="#b1b1b1" stroke-dasharray="1 1"/>
<line x1="526.5" y1="106" x2="526.5" y2="853" stroke="#b1b1b1" stroke-dasharray="1 1"/>
<line x1="537.5" y1="106" x2="537.5" y2="853" stroke="#b1b1b1" stroke-dasharray="1 1"/>
<line x1="549.5" y1="106" x2="549.5" y2="853" stroke="#767676"/>
<line x1="561.5" y1="106" x2="561.5" y2="853" stroke="#b1b1b1" stroke-dasharray="1 1"/>
<line x1="573.5" y1="106" x2="573.5" y2="853" stroke="#b1b1b1" stroke-dasharray="1 1"/>
<line x1="585.5" y1="106" x2="585.5" y2="853" stroke="#b1b1b1" stroke-dasharray="1 1"/>
<line x1="596.5" y1="106" x2="596.5" y2="853" stroke="#767676"/>
<line x1="608.5" y1="106" x2="608.5" y2="853" stroke="#b1b1b1" stroke-dasharray="1 1"/>
<line x1="620.5" y1="106" x2="620.5" y2="853" stroke="#b1b1b1" stroke-dasharray="1 1"/>
<line x1="632.5" y1="106" x2="632.5" y2="853" stroke="#b1b1b1" stroke-dasharray="1 1"/>
<line x1="644.5" y1="106" x2="644.5" y2="853" stroke="#767676"/>
<line x1="656.5" y1="106" x2="656.5" y2="853" stroke="#b1b1b1" stroke-dasharray="1 1"/>
<line x1="667.5" y1="106" x2="667.5" y2="853" stroke="#b1b1b1" stroke-dasharray="1 1"/>
<line x1="679.5" y1="106" x2="679.5" y2="853" stroke="#b1b1b1" stroke-dasharray="1 1"/>
<line x1="691.5" y1="106" x2="691.5" y2="853" stroke="#767676"/>
<line x1="703.5" y1="106" x2="703.5" y2="853" stroke="#b1b1b1" stroke-dasharray="1 1"/>
<line x1="715.5" y1="106" x2="715.5" y2="853" stroke="#b1b1b1" stroke-dasharray="1 1"/>
<line x1="726.5" y1="106" x2="726.5" y2="853" stroke="#b1b1b1" stroke-dasharray="1 1"/>
<line x1="738.5" y1="106" x2="738.5" y2="853" stroke="#767676"/>
<line x1="750.5" y1="106" x2="750.5" y2="853" stroke="#b1b1b1" stroke-dasharray="1 1"/>
<line x1="762.5" y1="106" x2="762.5" y2="853" stroke="#b1b1b1" stroke-dasharray="1 1"/>
<line x1="774.5" y1="106" x2="774.5" y2="853" stroke="#b1b1b1" stroke-dasharray="1 1"/>
<line x1="785.5" y1="106" x2="785.5" y2="853" stroke="#767676"/>
<line x1="797.5" y1="106" x2="797.5" y2="853" stroke="#b1b1b1" stroke-dasharray="1 1"/>
<line x1="809.5" y1="106" x2="809.5" y2="853" stroke="#b1b1b1" stroke-dasharray="1 1"/>
<line x1="821.5" y1="106" x2="821.5" y2="853" stroke="#b1b1b1" stroke-dasharray="1 1"/>
<line x1="833.5" y1="106" x2="833.5" y2="853" stroke="#767676"/>
<line x1="845.5" y1="106" x2="845.5" y2="853" stroke="#b1b1b1" stroke-dasharray="1 1"/>
<line x1="856.5" y1="106" x2="856.5" y2="853" stroke="#b1b1b1" stroke-dasharray="1 1"/>
<line x1="868.5" y1="106" x2="868.5" y2="853" stroke="#b1b1b1" stroke-dasharray="1 1"/>
<line x1="880.5" y1="106" x2="880.5" y2="853" stroke="#767676"/>
<line x1="892.5" y1="106" x2="892.5" y2="853" stroke="#b1b1b1" stroke-dasharray="1 1"/>
<line x1="904.5" y1="106" x2="904.5" y2="853" stroke="#b1b1b1" stroke-dasharray="1 1"/>
<line x1="915.5" y1="106" x2="915.5" y2="853" stroke="#b1b1b1" stroke-dasharray="1 1"/>
<line x1="927.5" y1="106" x2="927.5" y2="853" stroke="#767676"/>
<line x1="939.5" y1="106" x2="939.5" y2="853" stroke="#b1b1b1" stroke-dasharray="1 1"/>
<line x1="951.5" y1="106" x2="951.5" y2="853" stroke="#b1b1b1" stroke-dasharray="1 1"/>
<line x1="963.5" y1="106" x2="963.5" y2="853" stroke="#b1b1b1" stroke-dasharray="1 1"/>
<line x1="974.5" y1="106" x2="974.5" y2="853" stroke="#767676"/>
<line x1="986.5" y1="106" x2="986.5" y2="853" stroke="#b1b1b1" stroke-dasharray="1 1"/>
<line x1="998.5" y1="106" x2="998.5" y2="853" stroke="#b1b1b1" stroke-dasharray="1 1"/>
<line x1="1010.5" y1="106" x2="1010.5" y2="853" stroke="#b1b1b1" stroke-dasharray="1 1"/>
<line x1="220" y1="116.5" x2="1019" y2="116.5" stroke="#b1b1b1" stroke-dasharray="1 1"/>
<line x1="220" y1="128.5" x2="1019" y2="128.5" stroke="#b1b1b1" stroke-dasharray="1 1"/>
<line x1="220" y1="140.5" x2="1019" y2="140.5" stroke="#b1b1b1" stroke-dasharray="1 1"/>
<line x1="220" y1="152.5" x2="1019" y2="152.5" stroke="#767676"/>
<line x1="220" y1="164.5" x2="1019" y2="164.5" stroke="#b1b1b1" stroke-dasharray="1 1"/>
<line x1="220" y1="175.5" x2="1019" y2="175.5" stroke="#b1b1b1" stroke-dasharray="1 1"/>
<line x1="220" y1="187.5" x2="1019" y2="187.5" stroke="#b1b1b1" stroke-dasharray="1 1"/>
<line x1="220" y1="199.5" x2="1019" y2="199.5" stroke="#767676"/>
<line x1="220" y1="211.5" x2="1019" y2="211.5" stroke="#b1b1b1" stroke-dasharray="1 1"/>
<line x1="220" y1="223.5" x2="1019" y2="223.5" stroke="#b1b1b1" stroke-dasharray="1 1"/>
<line x1="220" y1="234.5" x2="1019" y2="234.5" stroke="#b1b1b1" stroke-dasharray="1 1"/>
<line x1="220" y1="246.5" x2="1019" y2="246.5" stroke="#767676"/>
<line x1="220" y1="258.5" x2="1019" y2="258.5" stroke="#b1b1b1" stroke-dasharray="1 1"/>
<line x1="220" y1="270.5" x2="1019" y2="270.5" stroke="#b1b1b1" stroke-dasharray="1 1"/>
<line x1="220" y1="282.5" x2="1019" y2="282.5" stroke="#b1b1b1" stroke-dasharray="1 1"/>
<line x1="220" y1="293.5" x2="1019" y2="293.5" stroke="#767676"/>
<line x1="220" y1="305.5" x2="1019" y2="305.5" stroke="#b1b1b1" stroke-dasharray="1 1"/>
<line x1="220" y1="317.5" x2="1019" y2="317.5" stroke="#b1b1b1" stroke-dasharray="1 1"/>
<line x1="220" y1="329.5" x2="1019" y2="329.5" stroke="#b1b1b1" stroke-dasharray="1 1"/>
<line x1="220" y1="341.5" x2="1019" y2="341.5" stroke="#767676"/>
<line x1="220" y1="353.5" x2="1019" y2="353.5" stroke="#b1b1b1" stroke-dasharray="1 1"/>
<line x1="220" y1="364.5" x2="1019" y2="364.5" stroke="#b1b1b1" stroke-dasharray="1 1"/>
<line x1="220" y1="376.5" x2="1019" y2="376.5" stroke="#b1b1b1" stroke-dasharray="1 1"/>
<line x1="220" y1="388.5" x2="1019" y2="388.5" stroke="#767676"/>
<line x1="220" y1="400.5" x2="1019" y2="400.5" stroke="#b1b1b1" stroke-dasharray="1 1"/>
<line x1="220" y1="412.5" x2="1019" y2="412.5" stroke="#b1b1b1" stroke-dasharray="1 1"/>
<line x1="220" y1="423.5" x2="1019" y2="423.5" stroke="#b1b1b1" stroke-dasharray="1 1"/>
<line x1="220" y1="435.5" x2="1019" y2="435.5" stroke="#767676"/>
<line x1="220" y1="447.5" x2="1019" y2="447.5" stroke="#b1b1b1" stroke-dasharray="1 1"/>
<line x1="220" y1="459.5" x2="1019" y2="459.5" stroke="#b1b1b1" stroke-dasharray="1 1"/>
<line x1="220" y1="471.5" x2="1019" y2="471.5" stroke="#b1b1b1" stroke-dasharray="1 1"/>
<line x1="220" y1="482.5" x2="1019" y2="482.5" stroke="#767676"/>
<line x1="220" y1="494.5" x2="1019" y2="494.5" stroke="#b1b1b1" stroke-dasharray="1 1"/>
<line x1="220" y1="506.5" x2="1019" y2="506.5" stroke="#b1b1b1" stroke-dasharray="1 1"/>
<line x1="220" y1="518.5" x2="1019" y2="518.5" stroke="#b1b1b1" stroke-dasharray="1 1"/>
<line x1="220" y1="530.5" x2="1019" y2="530.5" stroke="#767676"/>
<line x1="220" y1="542.5" x2="1019" y2="542.5" stroke="#b1b1b1" stroke-dasharray="1 1"/>
<line x1="220" y1="553.5" x2="1019" y2="553.5" stroke="#b1b1b1" stroke-dasharray="1 1"/>
<line x1="220" y1="565.5" x2="1019" y2="565.5" stroke="#b1b1b1" stroke-dasharray="1 1"/>
<line x1="220" y1="577.5" x2="1019" y2="577.5" stroke="#767676"/>
<line x1="220" y1="589.5" x2="1019" y2="589.5" stroke="#b1b1b1" stroke-dasharray="1 1"/>
<line x1="220" y1="601.5" x2="1019" y2="601.5" stroke="#b1b1b1" stroke-dasharray="1 1"/>
<line x1="220" y1="612.5" x2="1019" y2="612.5" stroke="#b1b1b1" stroke-dasharray="1 1"/>
<line x1="220" y1="624.5" x2="1019" y2="624.5" stroke="#767676"/>
<line x1="220" y1="636.5" x2="1019" y2="636.5" stroke="#b1b1b1" stroke-dasharray="1 1"/>
<line x1="220" y1="648.5" x2="1019" y2="648.5" stroke="#b1b1b1" stroke-dasharray="1 1"/>
<line x1="220" y1="660.5" x2="1019" y2="660.5" stroke="#b1b1b1" stroke-dasharray="1 1"/>
<line x1="220" y1="671.5" x2="1019" y2="671.5" stroke="#767676"/>
<line x1="220" y1="683.5" x2="1019" y2="683.5" stroke="#b1b1b1" stroke-dasharray="1 1"/>
<line x1="220" y1="695.5" x2="1019" y2="695.5" stroke="#b1b1b1" stroke-dasharray="1 1"/>
<line x1="220" y1="707.5" x2="1019" y2="707.5" stroke="#b1b1b1" stroke-dasharray="1 1"/>
<line x1="220" y1="719.5" x2="1019" y2="719.5" stroke="#767676"/>
<line x1="220" y1="731.5" x2="1019" y2="731.5" stroke="#b1b1b1" stroke-dasharray="1 1"/>
<line x1="220" y1="742.5" x2="1019" y2="742.5" stroke="#b1b1b1" stroke-dasharray="1 1"/>
<line x1="220" y1="754.5" x2="1019" y2="754.5" stroke="#b1b1b1" stroke-dasharray="1 1"/>
<line x1="220" y1="766.5" x2="1019" y2="766.5" stroke="#767676"/>
<line x1="220" y1="778.5" x2="1019" y2="778.5" stroke="#b1b1b1" stroke-dasharray="1 1"/>
<line x1="220" y1="790.5" x2="1019" y2="790.5" stroke="#b1b1b1" stroke-dasharray="1 1"/>
<line x1="220" y1="801.5" x2="1019" y2="801.5" stroke="#b1b1b1" stroke-dasharray="1 1"/>
<line x1="220" y1="813.5" x2="1019" y2="813.5" stroke="#767676"/>
<line x1="220" y1="825.5" x2="1019" y2="825.5" stroke="#b1b1b1" stroke-dasharray="1 1"/>
<line x1="220" y1="837.5" x2="1019" y2="837.5" stroke="#b1b1b1" stroke-dasharray="1 1"/>
<line x1="220" y1="849.5" x2="1019" y2="849.5" stroke="#b1b1b1" stroke-dasharray="1 1"/>
<rect x="361" y="247" width="283" height="283" fill="#00b3ef"/>
<line x1="372.5" y1="247" x2="372.5" y2="530" stroke="#ecdcd2" stroke-dasharray="1 1"/>
<line x1="384.5" y1="247" x2="384.5" y2="530" stroke="#ecdcd2" stroke-dasharray="1 1"/>
<line x1="396.5" y1="247" x2="396.5" y2="530" stroke="#ecdcd2" stroke-dasharray="1 1"/>
<line x1="407.5" y1="247" x2="407.5" y2="530" stroke="#85807a"/>
<line x1="419.5" y1="247" x2="419.5" y2="530" stroke="#ecdcd2" stroke-dasharray="1 1"/>
<line x1="431.5" y1="247" x2="431.5" y2="530" stroke="#ecdcd2" stroke-dasharray="1 1"/>
<line x1="443.5" y1="247" x2="443.5" y2="530" stroke="#ecdcd2" stroke-dasharray="1 1"/>
<line x1="455.5" y1="247" x2="455.5" y2="530" stroke="#85807a"/>
<line x1="467.5" y1="247" x2="467.5" y2="530" stroke="#ecdcd2" stroke-dasharray="1 1"/>
<line x1="478.5" y1="247" x2="478.5" y2="530" stroke="#ecdcd2" stroke-dasharray="1 1"/>
<line x1="490.5" y1="247" x2="490.5" y2="530" stroke="#ecdcd2" stroke-dasharray="1 1"/>
<line x1="502.5" y1="247" x2="502.5" y2="530" stroke="#85807a"/>
<line x1="514.5" y1="247" x2="514.5" y2="530" stroke="#ecdcd2" stroke-dasharray="1 1"/>
<line x1="526.5" y1="247" x2="526.5" y2="530" stroke="#ecdcd2" stroke-dasharray="1 1"/>
<line x1="537.5" y1="247" x2="537.5" y2="530" stroke="#ecdcd2" stroke-dasharray="1 1"/>
<line x1="549.5" y1="247" x2="549.5" y2="530" stroke="#85807a"/>
<line x1="561.5" y1="247" x2="561.5" y2="530" stroke="#ecdcd2" stroke-dasharray="1 1"/>
<line x1="573.5" y1="247" x2="573.5" y2="530" stroke="#ecdcd2" stroke-dasharray="1 1"/>
<line x1="585.5" y1="247" x2="585.5" y2="530" stroke="#ecdcd2" stroke-dasharray="1 1"/>
<line x1="596.5" y1="247" x2="596.5" y2="530" stroke="#85807a"/>
<line x1="608.5" y1="247" x2="608.5" y2="530" stroke="#ecdcd2" stroke-dasharray="1 1"/>
<line x1="620.5" y1="247" x2="620.5" y2="530" stroke="#ecdcd2" stroke-dasharray="1 1"/>
<line x1="632.5" y1="247" x2="632.5" y2="530" stroke="#ecdcd2" stroke-dasharray="1 1"/>
<line x1="361" y1="258.5" x2="644" y2="258.5" stroke="#ecdcd2" stroke-dasharray="1 1"/>
<line x1="361" y1="270.5" x2="644" y2="270.5" stroke="#ecdcd2" stroke-dasharray="1 1"/>
<line x1="361" y1="282.5" x2="644" y2="282.5" stroke="#ecdcd2" stroke-dasharray="1 1"/>
<line x1="361" y1="293.5" x2="644" y2="293.5" stroke="#85807a"/>
<line x1="361" y1="305.5" x2="644" y2="305.5" stroke="#ecdcd2" stroke-dasharray="1 1"/>
<line x1="361" y1="317.5" x2="644" y2="317.5" stroke="#ecdcd2" stroke-dasharray="1 1"/>
<line x1="361" y1="329.5" x2="644" y2="329.5" stroke="#ecdcd2" stroke-dasharray="1 1"/>
<line x1="361" y1="341.5" x2="644" y2="341.5" stroke="#85807a"/>
<line x1="361" y1="353.5" x2="644" y2="353.5" stroke="#ecdcd2" stroke-dasharray="1 1"/>
<line x1="361" y1="364.5" x2="644" y2="364.5" stroke="#ecdcd2" stroke-dasharray="1 1"/>
<line x1="361" y1="376.5" x2="644" y2="376.5" stroke="#ecdcd2" stroke-dasharray="1 1"/>
<line x1="361" y1="388.5" x2="644" y2="388.5" stroke="#85807a"/>
<line x1="361" y1="400.5" x2="644" y2="400.5" stroke="#ecdcd2" stroke-dasharray="1 1"/>
<line x1="361" y1="412.5" x2="644" y2="412.5" stroke="#ecdcd2" stroke-dasharray="1 1"/>
<line x1="361" y1="423.5" x2="644" y2="423.5" stroke="#ecdcd2" stroke-dasharray="1 1"/>
<line x1="361" y1="435.5" x2="644" y2="435.5" stroke="#85807a"/>
<line x1="361" y1="447.5" x2="644" y2="447.5" stroke="#ecdcd2" stroke-dasharray="1 1"/>
<line x1="361" y1="459.5" x2="644" y2="459.5" stroke="#ecdcd2" stroke-dasharray="1 1"/>
<line x1="361" y1="471.5" x2="644" y2="471.5" stroke="#ecdcd2" stroke-dasharray="1 1"/>
<line x1="361" y1="482.5" x2="644" y2="482.5" stroke="#85807a"/>
<line x1="361" y1="494.5" x2="644" y2="494.5" stroke="#ecdcd2" stroke-dasharray="1 1"/>
<line x1="361" y1="506.5" x2="644" y2="506.5" stroke="#ecdcd2" stroke-dasharray="1 1"/>
<line x1="361" y1="518.5" x2="644" y2="518.5" stroke="#ecdcd2" stroke-dasharray="1 1"/>
<rect x="360.5" y="246.5" width="284" height="284" fill="none" stroke="#000"/>
</svg>
<div class="a" style="left:1141px;top:82px;width:16px;height:771px;background:#3d3d3d;border-left:1px solid #303030"></div>
<svg style="left:1145px;top:89px" width="8" height="5"><path d="M0 5H8L4 0Z" fill="#e8e8e8"/></svg>
<svg style="left:1145px;top:844px" width="8" height="5"><path d="M0 0H8L4 5Z" fill="#e8e8e8"/></svg>
<div class="a" style="left:1143px;top:328px;width:12px;height:259px;background:linear-gradient(90deg,#a2a2a2,#7a7a7a);border-radius:4px"></div>
<div class="a" style="left:41px;top:853px;width:1100px;height:14px;background:#4a4a4a"></div>
<div class="a" style="left:41px;top:853px;width:1100px;height:1px;background:#3a3a3a"></div>
<div class="t" style="left:42px;top:856px;font-size:11.5px;color:#efefef">66.67%</div>
<div class="a" style="left:285px;top:854px;width:11px;height:13px;background:#5a5a5a"></div>
<div class="a" style="left:89px;top:854px;width:23px;height:13px;background:#5a5a5a"></div>
<svg style="left:94px;top:855px" width="13" height="12"><circle cx="6.5" cy="6" r="5.5" fill="#c8c8c8"/><path d="M4 3.5H7.5L9.5 5.5V9H4Z" fill="#4a4a4a"/><path d="M7.5 3.5V5.5H9.5" fill="none" stroke="#c8c8c8" stroke-width="0.8"/></svg>
<div class="t" style="left:148px;top:855px;font-size:12px;color:#efefef">文档:4.12M/0 字节</div>
<svg style="left:286px;top:856px" width="7" height="9"><path d="M0 0L7 4.5L0 9Z" fill="#e8e8e8"/></svg>
<div class="a" style="left:296px;top:853px;width:845px;height:14px;background:#3d3d3d;border-top:1px solid #333"></div>
<svg style="left:301px;top:857px" width="4" height="7"><path d="M4 0V7L0 3.5Z" fill="#d8d8d8"/></svg>
<svg style="left:1130px;top:857px" width="4" height="7"><path d="M0 0V7L4 3.5Z" fill="#d8d8d8"/></svg>
<div class="a" style="left:557px;top:855px;width:312px;height:12px;background:linear-gradient(#a8a8a8,#808080);border-radius:4px 4px 0 0"></div>
<div class="a" style="left:1157px;top:63px;width:3px;height:804px;background:#2b2b2b"></div>
<div class="a" style="left:1160px;top:63px;width:37px;height:804px;background:#545454"></div>
<div class="a" style="left:1197px;top:63px;width:3px;height:804px;background:#2b2b2b"></div>
<div class="a" style="left:1160px;top:63px;width:37px;height:11px;background:#393939"></div>
<svg style="left:1185px;top:66px" width="9" height="6"><path d="M4 0L0 3L4 6Z M9 0L5 3L9 6Z" fill="#d0d0d0"/></svg>
<div class="a" style="left:1160px;top:75px;width:37px;height:40px;background:#535353;box-shadow:inset 0 1px 0 #5f5f5f"></div>
<div class="a" style="left:1160px;top:115px;width:37px;height:1px;background:#2e2e2e"></div>
<div class="a" style="left:1169px;top:79px;width:1px;height:3px;background:#2a2a2a"></div>
<div class="a" style="left:1171px;top:79px;width:1px;height:3px;background:#2a2a2a"></div>
<div class="a" style="left:1173px;top:79px;width:1px;height:3px;background:#2a2a2a"></div>
<div class="a" style="left:1175px;top:79px;width:1px;height:3px;background:#2a2a2a"></div>
<div class="a" style="left:1177px;top:79px;width:1px;height:3px;background:#2a2a2a"></div>
<div class="a" style="left:1179px;top:79px;width:1px;height:3px;background:#2a2a2a"></div>
<div class="a" style="left:1181px;top:79px;width:1px;height:3px;background:#2a2a2a"></div>
<div class="a" style="left:1183px;top:79px;width:1px;height:3px;background:#2a2a2a"></div>
<div class="a" style="left:1185px;top:79px;width:1px;height:3px;background:#2a2a2a"></div>
<div class="a" style="left:1187px;top:79px;width:1px;height:3px;background:#2a2a2a"></div>
<div class="a" style="left:1160px;top:116px;width:37px;height:40px;background:#535353;box-shadow:inset 0 1px 0 #5f5f5f"></div>
<div class="a" style="left:1160px;top:156px;width:37px;height:1px;background:#2e2e2e"></div>
<div class="a" style="left:1169px;top:120px;width:1px;height:3px;background:#2a2a2a"></div>
<div class="a" style="left:1171px;top:120px;width:1px;height:3px;background:#2a2a2a"></div>
<div class="a" style="left:1173px;top:120px;width:1px;height:3px;background:#2a2a2a"></div>
<div class="a" style="left:1175px;top:120px;width:1px;height:3px;background:#2a2a2a"></div>
<div class="a" style="left:1177px;top:120px;width:1px;height:3px;background:#2a2a2a"></div>
<div class="a" style="left:1179px;top:120px;width:1px;height:3px;background:#2a2a2a"></div>
<div class="a" style="left:1181px;top:120px;width:1px;height:3px;background:#2a2a2a"></div>
<div class="a" style="left:1183px;top:120px;width:1px;height:3px;background:#2a2a2a"></div>
<div class="a" style="left:1185px;top:120px;width:1px;height:3px;background:#2a2a2a"></div>
<div class="a" style="left:1187px;top:120px;width:1px;height:3px;background:#2a2a2a"></div>
<div class="a" style="left:1160px;top:157px;width:37px;height:69px;background:#535353;box-shadow:inset 0 1px 0 #5f5f5f"></div>
<div class="a" style="left:1160px;top:226px;width:37px;height:1px;background:#2e2e2e"></div>
<div class="a" style="left:1169px;top:161px;width:1px;height:3px;background:#2a2a2a"></div>
<div class="a" style="left:1171px;top:161px;width:1px;height:3px;background:#2a2a2a"></div>
<div class="a" style="left:1173px;top:161px;width:1px;height:3px;background:#2a2a2a"></div>
<div class="a" style="left:1175px;top:161px;width:1px;height:3px;background:#2a2a2a"></div>
<div class="a" style="left:1177px;top:161px;width:1px;height:3px;background:#2a2a2a"></div>
<div class="a" style="left:1179px;top:161px;width:1px;height:3px;background:#2a2a2a"></div>
<div class="a" style="left:1181px;top:161px;width:1px;height:3px;background:#2a2a2a"></div>
<div class="a" style="left:1183px;top:161px;width:1px;height:3px;background:#2a2a2a"></div>
<div class="a" style="left:1185px;top:161px;width:1px;height:3px;background:#2a2a2a"></div>
<div class="a" style="left:1187px;top:161px;width:1px;height:3px;background:#2a2a2a"></div>
<div class="a" style="left:1160px;top:227px;width:37px;height:68px;background:#535353;box-shadow:inset 0 1px 0 #5f5f5f"></div>
<div class="a" style="left:1160px;top:295px;width:37px;height:1px;background:#2e2e2e"></div>
<div class="a" style="left:1169px;top:231px;width:1px;height:3px;background:#2a2a2a"></div>
<div class="a" style="left:1171px;top:231px;width:1px;height:3px;background:#2a2a2a"></div>
<div class="a" style="left:1173px;top:231px;width:1px;height:3px;background:#2a2a2a"></div>
<div class="a" style="left:1175px;top:231px;width:1px;height:3px;background:#2a2a2a"></div>
<div class="a" style="left:1177px;top:231px;width:1px;height:3px;background:#2a2a2a"></div>
<div class="a" style="left:1179px;top:231px;width:1px;height:3px;background:#2a2a2a"></div>
<div class="a" style="left:1181px;top:231px;width:1px;height:3px;background:#2a2a2a"></div>
<div class="a" style="left:1183px;top:231px;width:1px;height:3px;background:#2a2a2a"></div>
<div class="a" style="left:1185px;top:231px;width:1px;height:3px;background:#2a2a2a"></div>
<div class="a" style="left:1187px;top:231px;width:1px;height:3px;background:#2a2a2a"></div>
<div class="a" style="left:1160px;top:296px;width:37px;height:39px;background:#535353;box-shadow:inset 0 1px 0 #5f5f5f"></div>
<div class="a" style="left:1160px;top:335px;width:37px;height:1px;background:#2e2e2e"></div>
<div class="a" style="left:1169px;top:300px;width:1px;height:3px;background:#2a2a2a"></div>
<div class="a" style="left:1171px;top:300px;width:1px;height:3px;background:#2a2a2a"></div>
<div class="a" style="left:1173px;top:300px;width:1px;height:3px;background:#2a2a2a"></div>
<div class="a" style="left:1175px;top:300px;width:1px;height:3px;background:#2a2a2a"></div>
<div class="a" style="left:1177px;top:300px;width:1px;height:3px;background:#2a2a2a"></div>
<div class="a" style="left:1179px;top:300px;width:1px;height:3px;background:#2a2a2a"></div>
<div class="a" style="left:1181px;top:300px;width:1px;height:3px;background:#2a2a2a"></div>
<div class="a" style="left:1183px;top:300px;width:1px;height:3px;background:#2a2a2a"></div>
<div class="a" style="left:1185px;top:300px;width:1px;height:3px;background:#2a2a2a"></div>
<div class="a" style="left:1187px;top:300px;width:1px;height:3px;background:#2a2a2a"></div>
<svg style="left:0;top:0" width="1440" height="867">
<rect x="1173.5" y="89.5" width="5" height="5" fill="none" stroke="#c4c4c4"/><rect x="1173.5" y="95.5" width="5" height="5" fill="none" stroke="#c4c4c4"/><rect x="1173" y="102" width="6" height="5.5" fill="#c4c4c4"/><path d="M1182 90.5H1184C1187.5 93 1187.5 101 1183 104.5" fill="none" stroke="#c4c4c4" stroke-width="2.2"/><path d="M1181 89.5L1185 88V94Z" fill="#c4c4c4"/>
<path d="M1173 128L1178.5 125L1184 128V134L1178.5 137L1173 134Z" fill="none" stroke="#c4c4c4" stroke-width="1.3"/><path d="M1173 128L1178.5 131L1184 128M1178.5 131V137" fill="none" stroke="#c4c4c4" stroke-width="1"/><rect x="1186" y="126" width="4" height="3" fill="#c4c4c4"/><rect x="1186" y="131" width="4" height="3" fill="#c4c4c4"/><rect x="1171" y="140" width="19" height="4" fill="#a8a8a8"/><path d="M1184 141H1189L1186.5 143.5Z" fill="#333"/>
<path d="M1174 176H1184L1183 186H1175Z" fill="#c4c4c4"/><path d="M1176 176L1172 167M1179 176L1178.5 164M1182 176L1186 168" stroke="#c4c4c4" stroke-width="1.6"/><path d="M1170 165C1171 163 1173 164 1174 167L1172 169Z M1177 162C1178 160 1180 161 1180.5 164L1178 166Z M1185 166C1187 165 1189 166 1188 169L1186 170Z" fill="#c4c4c4"/>
<path d="M1170 202H1180M1170 213H1177" stroke="#c4c4c4" stroke-width="2"/><path d="M1180 199C1186 198 1190 201 1190 204C1187 205 1183 204 1180 202Z" fill="#c4c4c4"/><path d="M1177 213C1183 209 1188 209 1188 209C1188 213 1187 217 1183 218C1180 217 1178 215 1177 213Z" fill="#c4c4c4"/>
<path d="M1171 257L1176.5 242H1178.5L1184 257H1181.5L1180 253H1175L1173.5 257Z M1175.7 250.8H1179.3L1177.5 245.5Z" fill="#c4c4c4"/><rect x="1186" y="241" width="1.5" height="17" fill="#c4c4c4"/>
<path d="M1178 271H1188V286H1185.5V273.5H1183V286H1180.5V279C1176 279 1173 277.5 1173 275C1173 272.5 1175 271 1178 271Z" fill="#c4c4c4"/>
<path d="M1172.5 325.5L1186 311" stroke="#c4c4c4" stroke-width="3" stroke-linecap="round"/><path d="M1176 311.5L1187 322" stroke="#c4c4c4" stroke-width="2"/><circle cx="1187.5" cy="322.5" r="2.6" fill="none" stroke="#c4c4c4" stroke-width="1.6"/><path d="M1170 313C1170 309.5 1173 308 1176 309L1174 311.5L1175.5 313.5L1178.5 311.5C1179 314.5 1177 316.5 1173.5 316Z" fill="#c4c4c4"/>
</svg>
<div class="a" style="left:1200px;top:63px;width:240px;height:804px;background:#535353"></div>
<div class="a" style="left:1438px;top:63px;width:2px;height:804px;background:#2b2b2b"></div>
<div class="a" style="left:1200px;top:63px;width:238px;height:11px;background:#393939"></div>
<svg style="left:1428px;top:66px" width="9" height="6"><path d="M0 0L4 3L0 6Z M5 0L9 3L5 6Z" fill="#d0d0d0"/></svg>
<div class="a" style="left:1200px;top:75px;width:238px;height:17px;background:#3c3c3c"></div>
<div class="a" style="left:1200px;top:75px;width:38px;height:17px;background:#3f3f3f;border-right:1px solid #333"></div>
<div class="t" style="left:1207px;top:78px;font-size:12px;color:#b4b4b4">颜色</div>
<div class="a" style="left:1238px;top:75px;width:37px;height:17px;background:#535353"></div>
<div class="t" style="left:1245px;top:78px;font-size:12px;color:#f2f2f2">色板</div>
<div class="a" style="left:1200px;top:92px;width:238px;height:1px;background:#5e5e5e"></div>
<svg style="left:1421px;top:79px" width="14" height="9"><path d="M0 3H5L2.5 6Z" fill="#d8d8d8"/><path d="M5 0.5H14M5 3.5H14M5 6.5H14M5 8.5H14" stroke="#e0e0e0" stroke-width="1"/></svg>
<div class="a" style="left:1200px;top:93px;width:238px;height:164px;background:#474747"></div>
<div class="a" style="left:1424px;top:93px;width:14px;height:164px;background:#3f3f3f"></div>
<svg style="left:1427px;top:99px" width="8" height="5"><path d="M0 5H8L4 0Z" fill="#e8e8e8"/></svg>
<svg style="left:1427px;top:247px" width="8" height="5"><path d="M0 0H8L4 5Z" fill="#e8e8e8"/></svg>
<div class="a" style="left:1426px;top:112px;width:11px;height:120px;background:linear-gradient(90deg,#9a9a9a,#7a7a7a);border-radius:4px"></div>
<div class="a" style="left:1200px;top:257px;width:238px;height:18px;background:#535353;border-top:1px solid #646464"></div>
<svg style="left:1370px;top:261px" width="12" height="12"><path d="M2 0H11V11H4V9H2Z" fill="#cfcfcf"/><path d="M0.5 9.5H3.5V11.5" fill="none" stroke="#cfcfcf"/><path d="M1 9L3.5 11.5" stroke="#cfcfcf"/></svg>
<svg style="left:1399px;top:261px" width="12" height="12"><rect x="0" y="2" width="12" height="1.6" fill="#bdbdbd"/><rect x="4" y="0" width="4" height="2" fill="none" stroke="#bdbdbd" stroke-width="1"/><path d="M1.5 4.5H10.5L10 12H2Z" fill="#bdbdbd"/><path d="M4 5.5V11M6 5.5V11M8 5.5V11" stroke="#535353" stroke-width="0.8"/></svg>
<svg style="left:1427px;top:266px" width="10" height="8"><rect x="8" y="0" width="1" height="1" fill="#9a9a9a"/><rect x="8" y="3" width="1" height="1" fill="#9a9a9a"/><rect x="5" y="3" width="1" height="1" fill="#9a9a9a"/><rect x="8" y="6" width="1" height="1" fill="#9a9a9a"/><rect x="5" y="6" width="1" height="1" fill="#9a9a9a"/><rect x="2" y="6" width="1" height="1" fill="#9a9a9a"/></svg>
<div class="a" style="left:1200px;top:275px;width:238px;height:3px;background:#2b2b2b"></div>
<div class="a" style="left:1200px;top:278px;width:238px;height:17px;background:#3c3c3c"></div>
<div class="a" style="left:1200px;top:278px;width:38px;height:17px;background:#3f3f3f;border-right:1px solid #333"></div>
<div class="t" style="left:1207px;top:281px;font-size:12px;color:#b4b4b4">调整</div>
<div class="a" style="left:1238px;top:278px;width:37px;height:17px;background:#535353"></div>
<div class="t" style="left:1245px;top:281px;font-size:12px;color:#f2f2f2">样式</div>
<div class="a" style="left:1200px;top:295px;width:238px;height:1px;background:#5e5e5e"></div>
<svg style="left:1421px;top:282px" width="14" height="9"><path d="M0 3H5L2.5 6Z" fill="#d8d8d8"/><path d="M5 0.5H14M5 3.5H14M5 6.5H14M5 8.5H14" stroke="#e0e0e0" stroke-width="1"/></svg>
<div class="a" style="left:1200px;top:296px;width:238px;height:162px;background:#474747"></div>
<div class="a" style="left:1424px;top:296px;width:14px;height:162px;background:#3f3f3f"></div>
<div class="a" style="left:1200px;top:458px;width:238px;height:19px;background:#535353;border-top:1px solid #646464"></div>
<svg style="left:1338px;top:462px" width="12" height="12"><circle cx="6" cy="6" r="5" fill="none" stroke="#9a9a9a" stroke-width="1.6"/><path d="M2.5 2.5L9.5 9.5" stroke="#9a9a9a" stroke-width="1.6"/></svg>
<svg style="left:1370px;top:463px" width="12" height="12"><path d="M2 0H11V11H4V9H2Z" fill="#cfcfcf"/><path d="M0.5 9.5H3.5V11.5" fill="none" stroke="#cfcfcf"/><path d="M1 9L3.5 11.5" stroke="#cfcfcf"/></svg>
<svg style="left:1399px;top:463px" width="12" height="12"><rect x="0" y="2" width="12" height="1.6" fill="#9e9e9e"/><rect x="4" y="0" width="4" height="2" fill="none" stroke="#9e9e9e" stroke-width="1"/><path d="M1.5 4.5H10.5L10 12H2Z" fill="#9e9e9e"/><path d="M4 5.5V11M6 5.5V11M8 5.5V11" stroke="#535353" stroke-width="0.8"/></svg>
<svg style="left:1427px;top:468px" width="10" height="8"><rect x="8" y="0" width="1" height="1" fill="#9a9a9a"/><rect x="8" y="3" width="1" height="1" fill="#9a9a9a"/><rect x="5" y="3" width="1" height="1" fill="#9a9a9a"/><rect x="8" y="6" width="1" height="1" fill="#9a9a9a"/><rect x="5" y="6" width="1" height="1" fill="#9a9a9a"/><rect x="2" y="6" width="1" height="1" fill="#9a9a9a"/></svg>
<div class="a" style="left:1200px;top:477px;width:238px;height:3px;background:#2b2b2b"></div>
<svg style="left:0;top:0" width="1440" height="867" shape-rendering="crispEdges">
<rect x="1200" y="93" width="216" height="157" fill="#2e2e2e"/><rect x="1200" y="249" width="120" height="7" fill="#2e2e2e"/>
<rect x="1200" y="94" width="11" height="11" fill="#ff0000"/>
<rect x="1212" y="94" width="11" height="11" fill="#ffff00"/>
<rect x="1224" y="94" width="11" height="11" fill="#00ff00"/>
<rect x="1236" y="94" width="11" height="11" fill="#00ffff"/>
<rect x="1248" y="94" width="11" height="11" fill="#0000ff"/>
<rect x="1260" y="94" width="11" height="11" fill="#ff00ff"/>
<rect x="1272" y="94" width="11" height="11" fill="#ffffff"/>
<rect x="1284" y="94" width="11" height="11" fill="#ebebeb"/>
<rect x="1296" y="94" width="11" height="11" fill="#e1e1e1"/>
<rect x="1308" y="94" width="11" height="11" fill="#d7d7d7"/>
<rect x="1320" y="94" width="11" height="11" fill="#cccccc"/>
<rect x="1332" y="94" width="11" height="11" fill="#c2c2c2"/>
<rect x="1344" y="94" width="11" height="11" fill="#b7b7b7"/>
<rect x="1356" y="94" width="11" height="11" fill="#acacac"/>
<rect x="1368" y="94" width="11" height="11" fill="#a0a0a0"/>
<rect x="1380" y="94" width="11" height="11" fill="#959595"/>
<rect x="1392" y="94" width="11" height="11" fill="#ee1c24"/>
<rect x="1404" y="94" width="11" height="11" fill="#fff200"/>
<rect x="1200" y="106" width="11" height="11" fill="#00a651"/>
<rect x="1212" y="106" width="11" height="11" fill="#00aeef"/>
<rect x="1224" y="106" width="11" height="11" fill="#2e3192"/>
<rect x="1236" y="106" width="11" height="11" fill="#ec008c"/>
<rect x="1248" y="106" width="11" height="11" fill="#999999"/>
<rect x="1260" y="106" width="11" height="11" fill="#8f8f8f"/>
<rect x="1272" y="106" width="11" height="11" fill="#858585"/>
<rect x="1284" y="106" width="11" height="11" fill="#777777"/>
<rect x="1296" y="106" width="11" height="11" fill="#6a6a6a"/>
<rect x="1308" y="106" width="11" height="11" fill="#555555"/>
<rect x="1320" y="106" width="11" height="11" fill="#464646"/>
<rect x="1332" y="106" width="11" height="11" fill="#3a3a3a"/>
<rect x="1344" y="106" width="11" height="11" fill="#1e1e1e"/>
<rect x="1356" y="106" width="11" height="11" fill="#000000"/>
<rect x="1368" y="106" width="11" height="11" fill="#f7977a"/>
<rect x="1380" y="106" width="11" height="11" fill="#f9ad81"/>
<rect x="1392" y="106" width="11" height="11" fill="#fdc68a"/>
<rect x="1404" y="106" width="11" height="11" fill="#fff79a"/>
<rect x="1200" y="118" width="11" height="11" fill="#c4df9b"/>
<rect x="1212" y="118" width="11" height="11" fill="#a3d39c"/>
<rect x="1224" y="118" width="11" height="11" fill="#82ca9c"/>
<rect x="1236" y="118" width="11" height="11" fill="#7accc8"/>
<rect x="1248" y="118" width="11" height="11" fill="#6dcff6"/>
<rect x="1260" y="118" width="11" height="11" fill="#7da7d9"/>
<rect x="1272" y="118" width="11" height="11" fill="#8393ca"/>
<rect x="1284" y="118" width="11" height="11" fill="#8781bd"/>
<rect x="1296" y="118" width="11" height="11" fill="#a187be"/>
<rect x="1308" y="118" width="11" height="11" fill="#bd8cbf"/>
<rect x="1320" y="118" width="11" height="11" fill="#f49ac2"/>
<rect x="1332" y="118" width="11" height="11" fill="#f6989d"/>
<rect x="1344" y="118" width="11" height="11" fill="#f26c4f"/>
<rect x="1356" y="118" width="11" height="11" fill="#f68e56"/>
<rect x="1368" y="118" width="11" height="11" fill="#fbaf5d"/>
<rect x="1380" y="118" width="11" height="11" fill="#fff568"/>
<rect x="1392" y="118" width="11" height="11" fill="#acd373"/>
<rect x="1404" y="118" width="11" height="11" fill="#7cc576"/>
<rect x="1200" y="130" width="11" height="11" fill="#3cb878"/>
<rect x="1212" y="130" width="11" height="11" fill="#1cbbb4"/>
<rect x="1224" y="130" width="11" height="11" fill="#00bff3"/>
<rect x="1236" y="130" width="11" height="11" fill="#448ccb"/>
<rect x="1248" y="130" width="11" height="11" fill="#5674b9"/>
<rect x="1260" y="130" width="11" height="11" fill="#605ca8"/>
<rect x="1272" y="130" width="11" height="11" fill="#8560a8"/>
<rect x="1284" y="130" width="11" height="11" fill="#a864a8"/>
<rect x="1296" y="130" width="11" height="11" fill="#f06eaa"/>
<rect x="1308" y="130" width="11" height="11" fill="#f26d7d"/>
<rect x="1320" y="130" width="11" height="11" fill="#ed1c24"/>
<rect x="1332" y="130" width="11" height="11" fill="#f26522"/>
<rect x="1344" y="130" width="11" height="11" fill="#f7941d"/>
<rect x="1356" y="130" width="11" height="11" fill="#fff200"/>
<rect x="1368" y="130" width="11" height="11" fill="#8dc63f"/>
<rect x="1380" y="130" width="11" height="11" fill="#39b54a"/>
<rect x="1392" y="130" width="11" height="11" fill="#00a651"/>
<rect x="1404" y="130" width="11" height="11" fill="#00a99d"/>
<rect x="1200" y="142" width="11" height="11" fill="#00aeef"/>
<rect x="1212" y="142" width="11" height="11" fill="#0072bc"/>
<rect x="1224" y="142" width="11" height="11" fill="#0054a6"/>
<rect x="1236" y="142" width="11" height="11" fill="#2e3192"/>
<rect x="1248" y="142" width="11" height="11" fill="#662d91"/>
<rect x="1260" y="142" width="11" height="11" fill="#92278f"/>
<rect x="1272" y="142" width="11" height="11" fill="#ec008c"/>
<rect x="1284" y="142" width="11" height="11" fill="#ed145b"/>
<rect x="1296" y="142" width="11" height="11" fill="#a8070b"/>
<rect x="1308" y="142" width="11" height="11" fill="#a0410d"/>
<rect x="1320" y="142" width="11" height="11" fill="#a36209"/>
<rect x="1332" y="142" width="11" height="11" fill="#aba000"/>
<rect x="1344" y="142" width="11" height="11" fill="#598527"/>
<rect x="1356" y="142" width="11" height="11" fill="#197b30"/>
<rect x="1368" y="142" width="11" height="11" fill="#007236"/>
<rect x="1380" y="142" width="11" height="11" fill="#00746b"/>
<rect x="1392" y="142" width="11" height="11" fill="#0076a3"/>
<rect x="1404" y="142" width="11" height="11" fill="#004b80"/>
<rect x="1200" y="154" width="11" height="11" fill="#003471"/>
<rect x="1212" y="154" width="11" height="11" fill="#1b1464"/>
<rect x="1224" y="154" width="11" height="11" fill="#440e62"/>
<rect x="1236" y="154" width="11" height="11" fill="#630460"/>
<rect x="1248" y="154" width="11" height="11" fill="#9e005d"/>
<rect x="1260" y="154" width="11" height="11" fill="#9e0039"/>
<rect x="1272" y="154" width="11" height="11" fill="#790000"/>
<rect x="1284" y="154" width="11" height="11" fill="#7b2e00"/>
<rect x="1296" y="154" width="11" height="11" fill="#7d4900"/>
<rect x="1308" y="154" width="11" height="11" fill="#827b00"/>
<rect x="1320" y="154" width="11" height="11" fill="#406618"/>
<rect x="1332" y="154" width="11" height="11" fill="#005e20"/>
<rect x="1344" y="154" width="11" height="11" fill="#005826"/>
<rect x="1356" y="154" width="11" height="11" fill="#005952"/>
<rect x="1368" y="154" width="11" height="11" fill="#005b7f"/>
<rect x="1380" y="154" width="11" height="11" fill="#003663"/>
<rect x="1392" y="154" width="11" height="11" fill="#002157"/>
<rect x="1404" y="154" width="11" height="11" fill="#0d004c"/>
<rect x="1200" y="166" width="11" height="11" fill="#32004b"/>
<rect x="1212" y="166" width="11" height="11" fill="#4b0049"/>
<rect x="1224" y="166" width="11" height="11" fill="#7b0046"/>
<rect x="1236" y="166" width="11" height="11" fill="#7a0026"/>
<rect x="1248" y="166" width="11" height="11" fill="#c7b299"/>
<rect x="1260" y="166" width="11" height="11" fill="#998675"/>
<rect x="1272" y="166" width="11" height="11" fill="#736357"/>
<rect x="1284" y="166" width="11" height="11" fill="#534741"/>
<rect x="1296" y="166" width="11" height="11" fill="#362f2d"/>
<rect x="1308" y="166" width="11" height="11" fill="#c69c6d"/>
<rect x="1320" y="166" width="11" height="11" fill="#a67c52"/>
<rect x="1332" y="166" width="11" height="11" fill="#8c6239"/>
<rect x="1344" y="166" width="11" height="11" fill="#754c24"/>
<rect x="1356" y="166" width="11" height="11" fill="#603913"/>
<rect x="1368" y="166" width="11" height="11" fill="#ff0000"/>
<rect x="1380" y="166" width="11" height="11" fill="#ffff00"/>
<rect x="1392" y="166" width="11" height="11" fill="#00ff00"/>
<rect x="1404" y="166" width="11" height="11" fill="#00ffff"/>
<rect x="1200" y="178" width="11" height="11" fill="#0000ff"/>
<rect x="1212" y="178" width="11" height="11" fill="#ff00ff"/>
<rect x="1224" y="178" width="11" height="11" fill="#ffffff"/>
<rect x="1236" y="178" width="11" height="11" fill="#ebebeb"/>
<rect x="1248" y="178" width="11" height="11" fill="#e1e1e1"/>
<rect x="1260" y="178" width="11" height="11" fill="#d7d7d7"/>
<rect x="1272" y="178" width="11" height="11" fill="#cccccc"/>
<rect x="1284" y="178" width="11" height="11" fill="#c2c2c2"/>
<rect x="1296" y="178" width="11" height="11" fill="#b7b7b7"/>
<rect x="1308" y="178" width="11" height="11" fill="#acacac"/>
<rect x="1320" y="178" width="11" height="11" fill="#a0a0a0"/>
<rect x="1332" y="178" width="11" height="11" fill="#959595"/>
<rect x="1344" y="178" width="11" height="11" fill="#ee1c24"/>
<rect x="1356" y="178" width="11" height="11" fill="#fff200"/>
<rect x="1368" y="178" width="11" height="11" fill="#00a651"/>
<rect x="1380" y="178" width="11" height="11" fill="#00aeef"/>
<rect x="1392" y="178" width="11" height="11" fill="#2e3192"/>
<rect x="1404" y="178" width="11" height="11" fill="#ec008c"/>
<rect x="1200" y="190" width="11" height="11" fill="#999999"/>
<rect x="1212" y="190" width="11" height="11" fill="#8f8f8f"/>
<rect x="1224" y="190" width="11" height="11" fill="#858585"/>
<rect x="1236" y="190" width="11" height="11" fill="#777777"/>
<rect x="1248" y="190" width="11" height="11" fill="#6a6a6a"/>
<rect x="1260" y="190" width="11" height="11" fill="#555555"/>
<rect x="1272" y="190" width="11" height="11" fill="#464646"/>
<rect x="1284" y="190" width="11" height="11" fill="#3a3a3a"/>
<rect x="1296" y="190" width="11" height="11" fill="#1e1e1e"/>
<rect x="1308" y="190" width="11" height="11" fill="#000000"/>
<rect x="1320" y="190" width="11" height="11" fill="#f7977a"/>
<rect x="1332" y="190" width="11" height="11" fill="#f9ad81"/>
<rect x="1344" y="190" width="11" height="11" fill="#fdc68a"/>
<rect x="1356" y="190" width="11" height="11" fill="#fff79a"/>
<rect x="1368" y="190" width="11" height="11" fill="#c4df9b"/>
<rect x="1380" y="190" width="11" height="11" fill="#a3d39c"/>
<rect x="1392" y="190" width="11" height="11" fill="#82ca9c"/>
<rect x="1404" y="190" width="11" height="11" fill="#7accc8"/>
<rect x="1200" y="202" width="11" height="11" fill="#6dcff6"/>
<rect x="1212" y="202" width="11" height="11" fill="#7da7d9"/>
<rect x="1224" y="202" width="11" height="11" fill="#8393ca"/>
<rect x="1236" y="202" width="11" height="11" fill="#8781bd"/>
<rect x="1248" y="202" width="11" height="11" fill="#a187be"/>
<rect x="1260" y="202" width="11" height="11" fill="#bd8cbf"/>
<rect x="1272" y="202" width="11" height="11" fill="#f49ac2"/>
<rect x="1284" y="202" width="11" height="11" fill="#f6989d"/>
<rect x="1296" y="202" width="11" height="11" fill="#f26c4f"/>
<rect x="1308" y="202" width="11" height="11" fill="#f68e56"/>
<rect x="1320" y="202" width="11" height="11" fill="#fbaf5d"/>
<rect x="1332" y="202" width="11" height="11" fill="#fff568"/>
<rect x="1344" y="202" width="11" height="11" fill="#acd373"/>
<rect x="1356" y="202" width="11" height="11" fill="#7cc576"/>
<rect x="1368" y="202" width="11" height="11" fill="#3cb878"/>
<rect x="1380" y="202" width="11" height="11" fill="#1cbbb4"/>
<rect x="1392" y="202" width="11" height="11" fill="#00bff3"/>
<rect x="1404" y="202" width="11" height="11" fill="#448ccb"/>
<rect x="1200" y="214" width="11" height="11" fill="#5674b9"/>
<rect x="1212" y="214" width="11" height="11" fill="#605ca8"/>
<rect x="1224" y="214" width="11" height="11" fill="#8560a8"/>
<rect x="1236" y="214" width="11" height="11" fill="#a864a8"/>
<rect x="1248" y="214" width="11" height="11" fill="#f06eaa"/>
<rect x="1260" y="214" width="11" height="11" fill="#f26d7d"/>
<rect x="1272" y="214" width="11" height="11" fill="#ed1c24"/>
<rect x="1284" y="214" width="11" height="11" fill="#f26522"/>
<rect x="1296" y="214" width="11" height="11" fill="#f7941d"/>
<rect x="1308" y="214" width="11" height="11" fill="#fff200"/>
<rect x="1320" y="214" width="11" height="11" fill="#8dc63f"/>
<rect x="1332" y="214" width="11" height="11" fill="#39b54a"/>
<rect x="1344" y="214" width="11" height="11" fill="#00a651"/>
<rect x="1356" y="214" width="11" height="11" fill="#00a99d"/>
<rect x="1368" y="214" width="11" height="11" fill="#00aeef"/>
<rect x="1380" y="214" width="11" height="11" fill="#0072bc"/>
<rect x="1392" y="214" width="11" height="11" fill="#0054a6"/>
<rect x="1404" y="214" width="11" height="11" fill="#2e3192"/>
<rect x="1200" y="226" width="11" height="11" fill="#662d91"/>
<rect x="1212" y="226" width="11" height="11" fill="#92278f"/>
<rect x="1224" y="226" width="11" height="11" fill="#ec008c"/>
<rect x="1236" y="226" width="11" height="11" fill="#ed145b"/>
<rect x="1248" y="226" width="11" height="11" fill="#a8070b"/>
<rect x="1260" y="226" width="11" height="11" fill="#a0410d"/>
<rect x="1272" y="226" width="11" height="11" fill="#a36209"/>
<rect x="1284" y="226" width="11" height="11" fill="#aba000"/>
<rect x="1296" y="226" width="11" height="11" fill="#598527"/>
<rect x="1308" y="226" width="11" height="11" fill="#197b30"/>
<rect x="1320" y="226" width="11" height="11" fill="#007236"/>
<rect x="1332" y="226" width="11" height="11" fill="#00746b"/>
<rect x="1344" y="226" width="11" height="11" fill="#0076a3"/>
<rect x="1356" y="226" width="11" height="11" fill="#004b80"/>
<rect x="1368" y="226" width="11" height="11" fill="#003471"/>
<rect x="1380" y="226" width="11" height="11" fill="#1b1464"/>
<rect x="1392" y="226" width="11" height="11" fill="#440e62"/>
<rect x="1404" y="226" width="11" height="11" fill="#630460"/>
<rect x="1200" y="238" width="11" height="11" fill="#9e005d"/>
<rect x="1212" y="238" width="11" height="11" fill="#9e0039"/>
<rect x="1224" y="238" width="11" height="11" fill="#790000"/>
<rect x="1236" y="238" width="11" height="11" fill="#7b2e00"/>
<rect x="1248" y="238" width="11" height="11" fill="#7d4900"/>
<rect x="1260" y="238" width="11" height="11" fill="#827b00"/>
<rect x="1272" y="238" width="11" height="11" fill="#406618"/>
<rect x="1284" y="238" width="11" height="11" fill="#005e20"/>
<rect x="1296" y="238" width="11" height="11" fill="#005826"/>
<rect x="1308" y="238" width="11" height="11" fill="#005952"/>
<rect x="1320" y="238" width="11" height="11" fill="#005b7f"/>
<rect x="1332" y="238" width="11" height="11" fill="#003663"/>
<rect x="1344" y="238" width="11" height="11" fill="#002157"/>
<rect x="1356" y="238" width="11" height="11" fill="#0d004c"/>
<rect x="1368" y="238" width="11" height="11" fill="#32004b"/>
<rect x="1380" y="238" width="11" height="11" fill="#4b0049"/>
<rect x="1392" y="238" width="11" height="11" fill="#7b0046"/>
<rect x="1404" y="238" width="11" height="11" fill="#7a0026"/>
<rect x="1200" y="250" width="11" height="6" fill="#c7b299"/>
<rect x="1212" y="250" width="11" height="6" fill="#998675"/>
<rect x="1224" y="250" width="11" height="6" fill="#736357"/>
<rect x="1236" y="250" width="11" height="6" fill="#534741"/>
<rect x="1248" y="250" width="11" height="6" fill="#362f2d"/>
<rect x="1260" y="250" width="11" height="6" fill="#c69c6d"/>
<rect x="1272" y="250" width="11" height="6" fill="#a67c52"/>
<rect x="1284" y="250" width="11" height="6" fill="#8c6239"/>
<rect x="1296" y="250" width="11" height="6" fill="#754c24"/>
<rect x="1308" y="250" width="11" height="6" fill="#603913"/>
</svg>
<svg style="left:0;top:0" width="1440" height="867">
<defs><radialGradient id="s1"><stop offset="0" stop-color="#ffe000"/><stop offset="0.6" stop-color="#ff5000"/><stop offset="1" stop-color="#d00000"/></radialGradient><radialGradient id="s3" cx="0.4" cy="0.35"><stop offset="0" stop-color="#8a8a8a"/><stop offset="0.5" stop-color="#3a3a3a"/><stop offset="1" stop-color="#1a1a1a"/></radialGradient><linearGradient id="s4" x1="0" y1="0" x2="0" y2="1"><stop offset="0" stop-color="#c8e4ff"/><stop offset="0.5" stop-color="#3f8ee0"/><stop offset="1" stop-color="#1a5cb0"/></linearGradient><linearGradient id="s6" x1="0" y1="0" x2="1" y2="1"><stop offset="0" stop-color="#404040"/><stop offset="0.5" stop-color="#9a9a9a"/><stop offset="1" stop-color="#505050"/></linearGradient><linearGradient id="s8" x1="0" y1="0" x2="0" y2="1"><stop offset="0" stop-color="#6a5a38"/><stop offset="1" stop-color="#a89868"/></linearGradient><linearGradient id="s9" x1="0" y1="0" x2="0" y2="1"><stop offset="0" stop-color="#c02020"/><stop offset="0.25" stop-color="#ff4060"/><stop offset="0.45" stop-color="#8040a0"/><stop offset="0.6" stop-color="#e0c040"/><stop offset="0.8" stop-color="#e02040"/><stop offset="1" stop-color="#a01818"/></linearGradient><linearGradient id="s10" x1="0" y1="0" x2="1" y2="1"><stop offset="0" stop-color="#20c0c0"/><stop offset="0.3" stop-color="#101020"/><stop offset="0.5" stop-color="#2040d0"/><stop offset="0.7" stop-color="#f0e020"/><stop offset="1" stop-color="#303010"/></linearGradient><linearGradient id="s12" x1="0" y1="0" x2="1" y2="1"><stop offset="0" stop-color="#a07050"/><stop offset="0.5" stop-color="#e08050"/><stop offset="1" stop-color="#b0a050"/></linearGradient><linearGradient id="s13" x1="0" y1="0" x2="0" y2="1"><stop offset="0" stop-color="#7ab0f0"/><stop offset="1" stop-color="#d8e8ff"/></linearGradient><linearGradient id="s14" x1="0" y1="0" x2="0" y2="1"><stop offset="0" stop-color="#3a80d0"/><stop offset="0.45" stop-color="#e0e8f0"/><stop offset="0.6" stop-color="#806020"/><stop offset="1" stop-color="#d09020"/></linearGradient><linearGradient id="s16" x1="0" y1="0" x2="0" y2="1"><stop offset="0" stop-color="#d080d0"/><stop offset="0.5" stop-color="#5060c0"/><stop offset="1" stop-color="#a070c0"/></linearGradient><linearGradient id="s21" x1="0" y1="0" x2="0" y2="1"><stop offset="0" stop-color="#909090"/><stop offset="0.5" stop-color="#101010"/><stop offset="1" stop-color="#000"/></linearGradient><linearGradient id="s23" x1="0" y1="0" x2="0" y2="1"><stop offset="0" stop-color="#d0d0d0"/><stop offset="0.5" stop-color="#777"/><stop offset="1" stop-color="#aaa"/></linearGradient></defs>
<rect x="1200" y="296" width="32" height="32" fill="#3a3a3a"/><rect x="1231" y="296" width="1" height="32" fill="#3b3b3b"/><rect x="1200" y="327" width="32" height="1" fill="#3b3b3b"/>
<rect x="1232" y="296" width="32" height="32" fill="#535353"/><rect x="1263" y="296" width="1" height="32" fill="#3b3b3b"/><rect x="1232" y="327" width="32" height="1" fill="#3b3b3b"/>
<rect x="1264" y="296" width="32" height="32" fill="#535353"/><rect x="1295" y="296" width="1" height="32" fill="#3b3b3b"/><rect x="1264" y="327" width="32" height="1" fill="#3b3b3b"/>
<rect x="1296" y="296" width="32" height="32" fill="#535353"/><rect x="1327" y="296" width="1" height="32" fill="#3b3b3b"/><rect x="1296" y="327" width="32" height="1" fill="#3b3b3b"/>
<rect x="1328" y="296" width="32" height="32" fill="#535353"/><rect x="1359" y="296" width="1" height="32" fill="#3b3b3b"/><rect x="1328" y="327" width="32" height="1" fill="#3b3b3b"/>
<rect x="1360" y="296" width="32" height="32" fill="#535353"/><rect x="1391" y="296" width="1" height="32" fill="#3b3b3b"/><rect x="1360" y="327" width="32" height="1" fill="#3b3b3b"/>
<rect x="1392" y="296" width="32" height="32" fill="#535353"/><rect x="1423" y="296" width="1" height="32" fill="#3b3b3b"/><rect x="1392" y="327" width="32" height="1" fill="#3b3b3b"/>
<rect x="1200" y="328" width="32" height="32" fill="#535353"/><rect x="1231" y="328" width="1" height="32" fill="#3b3b3b"/><rect x="1200" y="359" width="32" height="1" fill="#3b3b3b"/>
<rect x="1232" y="328" width="32" height="32" fill="#535353"/><rect x="1263" y="328" width="1" height="32" fill="#3b3b3b"/><rect x="1232" y="359" width="32" height="1" fill="#3b3b3b"/>
<rect x="1264" y="328" width="32" height="32" fill="#535353"/><rect x="1295" y="328" width="1" height="32" fill="#3b3b3b"/><rect x="1264" y="359" width="32" height="1" fill="#3b3b3b"/>
<rect x="1296" y="328" width="32" height="32" fill="#535353"/><rect x="1327" y="328" width="1" height="32" fill="#3b3b3b"/><rect x="1296" y="359" width="32" height="1" fill="#3b3b3b"/>
<rect x="1328" y="328" width="32" height="32" fill="#535353"/><rect x="1359" y="328" width="1" height="32" fill="#3b3b3b"/><rect x="1328" y="359" width="32" height="1" fill="#3b3b3b"/>
<rect x="1360" y="328" width="32" height="32" fill="#535353"/><rect x="1391" y="328" width="1" height="32" fill="#3b3b3b"/><rect x="1360" y="359" width="32" height="1" fill="#3b3b3b"/>
<rect x="1392" y="328" width="32" height="32" fill="#535353"/><rect x="1423" y="328" width="1" height="32" fill="#3b3b3b"/><rect x="1392" y="359" width="32" height="1" fill="#3b3b3b"/>
<rect x="1200" y="360" width="32" height="32" fill="#535353"/><rect x="1231" y="360" width="1" height="32" fill="#3b3b3b"/><rect x="1200" y="391" width="32" height="1" fill="#3b3b3b"/>
<rect x="1232" y="360" width="32" height="32" fill="#535353"/><rect x="1263" y="360" width="1" height="32" fill="#3b3b3b"/><rect x="1232" y="391" width="32" height="1" fill="#3b3b3b"/>
<rect x="1264" y="360" width="32" height="32" fill="#535353"/><rect x="1295" y="360" width="1" height="32" fill="#3b3b3b"/><rect x="1264" y="391" width="32" height="1" fill="#3b3b3b"/>
<rect x="1296" y="360" width="32" height="32" fill="#535353"/><rect x="1327" y="360" width="1" height="32" fill="#3b3b3b"/><rect x="1296" y="391" width="32" height="1" fill="#3b3b3b"/>
<rect x="1328" y="360" width="32" height="32" fill="#535353"/><rect x="1359" y="360" width="1" height="32" fill="#3b3b3b"/><rect x="1328" y="391" width="32" height="1" fill="#3b3b3b"/>
<rect x="1360" y="360" width="32" height="32" fill="#535353"/><rect x="1391" y="360" width="1" height="32" fill="#3b3b3b"/><rect x="1360" y="391" width="32" height="1" fill="#3b3b3b"/>
<rect x="1392" y="360" width="32" height="32" fill="#535353"/><rect x="1423" y="360" width="1" height="32" fill="#3b3b3b"/><rect x="1392" y="391" width="32" height="1" fill="#3b3b3b"/>
<rect x="1200" y="392" width="32" height="32" fill="#535353"/><rect x="1231" y="392" width="1" height="32" fill="#3b3b3b"/><rect x="1200" y="423" width="32" height="1" fill="#3b3b3b"/>
<rect x="1232" y="392" width="32" height="32" fill="#535353"/><rect x="1263" y="392" width="1" height="32" fill="#3b3b3b"/><rect x="1232" y="423" width="32" height="1" fill="#3b3b3b"/>
<rect x="1264" y="392" width="32" height="32" fill="#535353"/><rect x="1295" y="392" width="1" height="32" fill="#3b3b3b"/><rect x="1264" y="423" width="32" height="1" fill="#3b3b3b"/>
<rect x="1296" y="392" width="32" height="32" fill="#535353"/><rect x="1327" y="392" width="1" height="32" fill="#3b3b3b"/><rect x="1296" y="423" width="32" height="1" fill="#3b3b3b"/>
<rect x="1208.5" y="304.5" width="15" height="15" fill="#fff" stroke="#000"/>
<path d="M1205 302L1227 322" stroke="#e01010" stroke-width="2"/>
<rect x="1241" y="306" width="16" height="16" fill="#2a2a2a" opacity="0.6"/><rect x="1240.5" y="304.5" width="15" height="15" fill="url(#s1)" stroke="#200000"/>
<rect x="1267.5" y="300.5" width="25" height="25" rx="5" fill="none" stroke="#e8e4c0" stroke-width="1.5"/><rect x="1270.5" y="303.5" width="19" height="19" rx="3" fill="none" stroke="#d8d4b0" stroke-width="1.2"/>
<rect x="1305" y="306" width="16" height="16" fill="#2a2a2a" opacity="0.6"/><rect x="1304.5" y="304.5" width="15" height="15" fill="url(#s3)" stroke="#222"/>
<circle cx="1312" cy="312" r="3" fill="none" stroke="#777" stroke-width="1"/>
<rect x="1337" y="306" width="16" height="16" fill="#2a2a2a" opacity="0.6"/><rect x="1336.5" y="304.5" width="15" height="15" fill="url(#s4)"/>
<rect x="1368.5" y="304.5" width="15" height="15" fill="#b4b4b4"/>
<rect x="1400.5" y="304.5" width="15" height="15" fill="url(#s6)"/>
<rect x="1208.5" y="336.5" width="15" height="15" fill="#7a6a48"/>
<rect x="1240.5" y="336.5" width="15" height="15" fill="url(#s8)"/>
<rect x="1273" y="338" width="16" height="16" fill="#2a2a2a" opacity="0.6"/><rect x="1272.5" y="336.5" width="15" height="15" fill="url(#s9)" stroke="#601010"/>
<rect x="1305" y="338" width="16" height="16" fill="#2a2a2a" opacity="0.6"/><rect x="1304.5" y="336.5" width="15" height="15" fill="url(#s10)"/>
<rect x="1337" y="338" width="16" height="16" fill="#2a2a2a" opacity="0.6"/><rect x="1336.5" y="336.5" width="15" height="15" fill="#e0c800" stroke="#8a7a00"/><rect x="1336" y="336" width="0" height="0"/>
<rect x="1339" y="339" width="10" height="10" fill="#a89400"/>
<rect x="1368.5" y="336.5" width="15" height="15" fill="url(#s12)"/>
<rect x="1400.5" y="336.5" width="15" height="15" fill="url(#s13)" stroke="#c0d8f0"/>
<rect x="1209" y="370" width="16" height="16" fill="#2a2a2a" opacity="0.6"/><rect x="1208.5" y="368.5" width="15" height="15" fill="url(#s14)" stroke="#333"/>
<rect x="1240.5" y="368.5" width="15" height="15" fill="#cfcfcf"/>
<rect x="1240" y="368" width="16" height="16" fill="#e8e8e8"/><g fill="#555"><rect x="1244" y="378" width="1" height="2"/><rect x="1250" y="376" width="1" height="1"/><rect x="1254" y="376" width="2" height="1"/><rect x="1244" y="380" width="2" height="2"/><rect x="1247" y="379" width="1" height="1"/><rect x="1251" y="371" width="2" height="1"/><rect x="1251" y="381" width="1" height="1"/><rect x="1253" y="378" width="1" height="2"/><rect x="1253" y="369" width="2" height="2"/><rect x="1250" y="380" width="2" height="2"/><rect x="1247" y="380" width="2" height="1"/><rect x="1246" y="370" width="1" height="1"/><rect x="1248" y="372" width="2" height="2"/><rect x="1253" y="379" width="2" height="2"/><rect x="1249" y="382" width="2" height="2"/><rect x="1249" y="378" width="2" height="1"/><rect x="1246" y="379" width="1" height="2"/><rect x="1250" y="379" width="1" height="2"/><rect x="1249" y="378" width="1" height="1"/><rect x="1251" y="382" width="2" height="2"/><rect x="1242" y="370" width="2" height="2"/><rect x="1242" y="374" width="1" height="2"/><rect x="1243" y="369" width="2" height="2"/><rect x="1253" y="375" width="1" height="1"/><rect x="1250" y="378" width="1" height="2"/><rect x="1252" y="378" width="2" height="2"/><rect x="1249" y="372" width="1" height="2"/><rect x="1241" y="370" width="1" height="1"/><rect x="1244" y="375" width="2" height="2"/><rect x="1243" y="380" width="1" height="2"/><rect x="1246" y="374" width="1" height="2"/><rect x="1247" y="376" width="2" height="1"/><rect x="1250" y="381" width="2" height="2"/><rect x="1251" y="380" width="1" height="2"/><rect x="1247" y="373" width="2" height="2"/><rect x="1241" y="381" width="2" height="2"/><rect x="1241" y="375" width="1" height="1"/><rect x="1251" y="379" width="2" height="2"/><rect x="1246" y="379" width="2" height="2"/><rect x="1252" y="376" width="1" height="1"/></g>
<rect x="1273" y="370" width="16" height="16" fill="#2a2a2a" opacity="0.6"/><rect x="1272.5" y="368.5" width="15" height="15" fill="url(#s16)"/>
<rect x="1305" y="370" width="16" height="16" fill="#2a2a2a" opacity="0.6"/><rect x="1304.5" y="368.5" width="15" height="15" fill="#585858" stroke="#4a4a4a"/>
<rect x="1336.5" y="368.5" width="15" height="15" fill="#4e4e4e" stroke="#333"/>
<rect x="1368.5" y="368.5" width="15" height="15" fill="#4e4e4e" stroke="#333"/>
<rect x="1400.5" y="368.5" width="15" height="15" fill="#111" stroke="#ddd"/>
<g fill="#c8c8c8"><rect x="1403" y="373" width="2" height="1"/><rect x="1413" y="381" width="1" height="1"/><rect x="1406" y="372" width="1" height="1"/><rect x="1402" y="377" width="1" height="1"/><rect x="1403" y="372" width="2" height="1"/><rect x="1413" y="371" width="1" height="1"/><rect x="1408" y="379" width="2" height="1"/><rect x="1401" y="381" width="2" height="1"/><rect x="1404" y="373" width="2" height="1"/><rect x="1401" y="376" width="2" height="1"/><rect x="1413" y="382" width="1" height="1"/><rect x="1414" y="369" width="1" height="1"/><rect x="1401" y="370" width="1" height="1"/><rect x="1402" y="376" width="1" height="1"/><rect x="1414" y="380" width="1" height="1"/><rect x="1409" y="377" width="2" height="1"/><rect x="1406" y="371" width="2" height="1"/><rect x="1402" y="374" width="2" height="1"/><rect x="1411" y="375" width="2" height="1"/><rect x="1406" y="373" width="1" height="1"/><rect x="1406" y="375" width="1" height="1"/><rect x="1403" y="377" width="1" height="1"/><rect x="1412" y="380" width="2" height="1"/><rect x="1413" y="370" width="1" height="1"/><rect x="1401" y="374" width="2" height="1"/><rect x="1410" y="379" width="2" height="1"/><rect x="1411" y="381" width="1" height="1"/><rect x="1410" y="375" width="1" height="1"/><rect x="1406" y="379" width="2" height="1"/><rect x="1413" y="380" width="2" height="1"/><rect x="1407" y="380" width="2" height="1"/><rect x="1408" y="369" width="1" height="1"/><rect x="1404" y="377" width="2" height="1"/><rect x="1412" y="378" width="1" height="1"/><rect x="1413" y="375" width="1" height="1"/><rect x="1407" y="371" width="1" height="1"/><rect x="1406" y="374" width="2" height="1"/><rect x="1402" y="376" width="1" height="1"/><rect x="1414" y="380" width="2" height="1"/><rect x="1411" y="370" width="2" height="1"/><rect x="1410" y="377" width="1" height="1"/><rect x="1413" y="378" width="1" height="1"/><rect x="1408" y="371" width="1" height="1"/><rect x="1413" y="375" width="1" height="1"/><rect x="1409" y="370" width="1" height="1"/></g>
<rect x="1209" y="402" width="16" height="16" fill="#2a2a2a" opacity="0.6"/><rect x="1208.5" y="400.5" width="15" height="15" fill="#050505"/>
<rect x="1241" y="402" width="16" height="16" fill="#2a2a2a" opacity="0.6"/><rect x="1240.5" y="400.5" width="15" height="15" fill="#050505"/>
<path d="M1208.5 400.5H1223.5L1216 408Z" fill="#8a8a8a"/><path d="M1240.5 400.5H1255.5L1248 408Z" fill="#8a8a8a"/>
<rect x="1273" y="402" width="16" height="16" fill="#2a2a2a" opacity="0.6"/><rect x="1272.5" y="400.5" width="15" height="15" fill="url(#s23)" stroke="#222"/>
<rect x="1305" y="402" width="16" height="16" fill="#2a2a2a" opacity="0.6"/><rect x="1304.5" y="400.5" width="15" height="15" fill="#fff" stroke="#555"/><path d="M1304 400H1304Z"/>
<path d="M1304.5 400.5H1319.5L1315 405H1309Z" fill="#a8d8f8"/><path d="M1315 405L1319.5 400.5V415.5L1315 411Z" fill="#777"/><path d="M1304.5 415.5H1319.5L1315 411H1309Z" fill="#555"/><path d="M1304.5 400.5L1309 405V411L1304.5 415.5Z" fill="#ccc"/>
</svg>
<div class="a" style="left:1200px;top:480px;width:238px;height:17px;background:#3c3c3c"></div>
<div class="a" style="left:1200px;top:480px;width:38px;height:17px;background:#535353"></div>
<div class="t" style="left:1207px;top:483px;font-size:12px;color:#f2f2f2">图层</div>
<div class="a" style="left:1238px;top:480px;width:37px;height:17px;background:#3f3f3f;border-right:1px solid #333"></div>
<div class="t" style="left:1245px;top:483px;font-size:12px;color:#b4b4b4">通道</div>
<div class="a" style="left:1275px;top:480px;width:37px;height:17px;background:#3f3f3f;border-right:1px solid #333"></div>
<div class="t" style="left:1282px;top:483px;font-size:12px;color:#b4b4b4">路径</div>
<div class="a" style="left:1200px;top:497px;width:238px;height:1px;background:#5e5e5e"></div>
<svg style="left:1421px;top:484px" width="14" height="9"><path d="M0 3H5L2.5 6Z" fill="#d8d8d8"/><path d="M5 0.5H14M5 3.5H14M5 6.5H14M5 8.5H14" stroke="#e0e0e0" stroke-width="1"/></svg>
<div class="a" style="left:1200px;top:498px;width:238px;height:84px;background:#535353"></div>
<div class="a" style="left:1205px;top:501px;width:69px;height:20px;background:linear-gradient(#6e6e6e,#5b5b5b);border:1px solid #2f2f2f;border-radius:3px;box-shadow:inset 0 1px 0 #7a7a7a"></div>
<svg style="left:1210px;top:505px" width="10" height="11"><circle cx="6" cy="4.5" r="3.3" fill="none" stroke="#cfcfcf" stroke-width="1.5"/><path d="M3.8 7L1 10" stroke="#cfcfcf" stroke-width="1.8"/></svg>
<div class="t" style="left:1227px;top:505px;font-size:12px;color:#f2f2f2">类型</div>
<svg style="left:1264px;top:506px" width="7" height="10"><path d="M0 4H7L3.5 0Z M0 6H7L3.5 10Z" fill="#e8e8e8"/></svg>
<div class="a" style="left:1200px;top:524px;width:238px;height:1px;background:#3a3a3a"></div>
<div class="a" style="left:1200px;top:525px;width:238px;height:1px;background:#5e5e5e"></div>
<div class="a" style="left:1205px;top:529px;width:110px;height:20px;background:linear-gradient(#6e6e6e,#5b5b5b);border:1px solid #2f2f2f;border-radius:3px;box-shadow:inset 0 1px 0 #7a7a7a"></div>
<div class="t" style="left:1213px;top:533px;font-size:12px;color:#f2f2f2">正常</div>
<svg style="left:1304px;top:534px" width="7" height="10"><path d="M0 4H7L3.5 0Z M0 6H7L3.5 10Z" fill="#e8e8e8"/></svg>
<div class="t" style="left:1322px;top:532px;font-size:12px;color:#efefef">不透明度:</div>
<div class="a" style="left:1381px;top:529px;width:33px;height:20px;background:#333;border:1px solid #2e2e2e"></div>
<div class="t" style="left:1383px;top:533px;font-size:12px;color:#efefef">100%</div>
<div class="a" style="left:1413px;top:529px;width:21px;height:20px;background:linear-gradient(#6e6e6e,#5a5a5a);border:1px solid #2f2f2f;border-radius:0 3px 3px 0"></div>
<svg style="left:1420px;top:537px" width="6" height="4"><path d="M0 0H6L3 4Z" fill="#e8e8e8"/></svg>
<div class="a" style="left:1200px;top:552px;width:238px;height:1px;background:#3a3a3a"></div>
<div class="a" style="left:1200px;top:553px;width:238px;height:1px;background:#5e5e5e"></div>
<div class="t" style="left:1206px;top:560px;font-size:12px;color:#efefef">锁定:</div>
<div class="t" style="left:1347px;top:560px;font-size:12px;color:#efefef">填充:</div>
<div class="a" style="left:1381px;top:557px;width:33px;height:20px;background:#333;border:1px solid #2e2e2e"></div>
<div class="t" style="left:1383px;top:561px;font-size:12px;color:#efefef">100%</div>
<div class="a" style="left:1413px;top:557px;width:21px;height:20px;background:linear-gradient(#6e6e6e,#5a5a5a);border:1px solid #2f2f2f;border-radius:0 3px 3px 0"></div>
<svg style="left:1420px;top:565px" width="6" height="4"><path d="M0 0H6L3 4Z" fill="#e8e8e8"/></svg>
<div class="a" style="left:1200px;top:581px;width:238px;height:269px;background:#474747"></div>
<div class="a" style="left:1200px;top:580px;width:238px;height:1px;background:#3a3a3a"></div>
<div class="a" style="left:1424px;top:581px;width:14px;height:269px;background:#3d3d3d"></div>
<div class="a" style="left:1230px;top:582px;width:194px;height:39px;background:#586579"></div>
<div class="a" style="left:1200px;top:621px;width:224px;height:1px;background:#3a3a3a"></div>
<div class="a" style="left:1200px;top:661px;width:224px;height:1px;background:#3a3a3a"></div>
<div class="a" style="left:1230px;top:582px;width:1px;height:79px;background:#3d3d3d"></div>
<div class="t" style="left:1276px;top:597px;font-size:12px;color:#f4f4f4">矩形 1</div>
<div class="t" style="left:1278px;top:636px;font-size:12px;color:#f0f0f0;font-style:italic">背景</div>
<div class="a" style="left:1200px;top:849px;width:238px;height:2px;background:#333"></div>
<div class="a" style="left:1200px;top:851px;width:238px;height:16px;background:#535353;border-top:1px solid #646464"></div>
<svg style="left:0;top:0" width="1440" height="867">
<rect x="1294.5" y="505.5" width="12" height="10" fill="none" stroke="#bdbdbd"/><path d="M1296 514L1299 510.5L1301 512.5L1303 510L1305.5 514Z" fill="#bdbdbd"/><circle cx="1303" cy="508" r="1" fill="#bdbdbd"/>
<circle cx="1324" cy="510.5" r="5.5" fill="#bdbdbd"/><path d="M1320 514.5L1328 506.5" stroke="#535353" stroke-width="1.2"/><path d="M1320.2 514.3A5.5 5.5 0 0 0 1328 506.5Z" fill="#8a8a8a"/>
<path d="M1342.5 505H1354V508H1353C1353 506.8 1352.5 506.5 1351 506.5H1349.2V515H1351V516.2H1345.5V515H1347.3V506.5H1345.5C1344 506.5 1343.5 506.8 1343.5 508H1342.5Z" fill="#c4c4c4"/>
<rect x="1367.5" y="505.5" width="10" height="10" fill="none" stroke="#bdbdbd"/><rect x="1366" y="504" width="3" height="3" fill="#bdbdbd"/><rect x="1376" y="504" width="3" height="3" fill="#bdbdbd"/><rect x="1366" y="514" width="3" height="3" fill="#bdbdbd"/><rect x="1376" y="514" width="3" height="3" fill="#bdbdbd"/>
<path d="M1395 505.5H1399.5L1402 508V516H1395Z" fill="none" stroke="#bdbdbd"/><rect x="1391" y="511" width="6" height="6" fill="#bdbdbd"/>
<rect x="1425" y="503" width="10" height="16" fill="#2e2e2e" stroke="#3a3a3a"/><rect x="1426" y="504" width="8" height="7" fill="#8a8a8a"/>
<g fill="#8a8a8a"><rect x="1244" y="562" width="11" height="11" fill="#6a6a6a"/><rect x="1244" y="562" width="3" height="3"/><rect x="1250" y="562" width="3" height="3"/><rect x="1247" y="565" width="3" height="3"/><rect x="1253" y="565" width="2" height="3"/><rect x="1244" y="568" width="3" height="3"/><rect x="1250" y="568" width="3" height="3"/><rect x="1247" y="571" width="3" height="2"/><rect x="1253" y="571" width="2" height="2"/></g>
<path d="M1264 573C1266 571 1267 568.5 1270 569L1279 561L1280.5 562.5L1272 571C1271.5 573 1268 574 1264 573Z" fill="#9a9a9a"/>
<path d="M1293.5 561V575M1286.5 568H1300.5" stroke="#c4c4c4" stroke-width="1.2"/><path d="M1291 563.5L1293.5 560.5L1296 563.5M1291 572.5L1293.5 575.5L1296 572.5M1289 565.5L1286 568L1289 570.5M1298 565.5L1301 568L1298 570.5" stroke="#c4c4c4" fill="none" stroke-width="1.2"/>
<path d="M1312.5 567V564.5A3 3 0 0 1 1318.5 564.5V567" fill="none" stroke="#c4c4c4" stroke-width="1.6"/><rect x="1311" y="567" width="9" height="7" fill="#c4c4c4"/><rect x="1315" y="569.5" width="1.2" height="2.5" fill="#555"/>
<path d="M1208 602.5C1211 598 1219 598 1222 602.5C1219 607 1211 607 1208 602.5Z" fill="#c0c0c0"/><circle cx="1215" cy="602.5" r="3" fill="#333"/><circle cx="1215.8" cy="601.7" r="0.9" fill="#bbb"/>
<path d="M1208 641.5C1211 637 1219 637 1222 641.5C1219 646 1211 646 1208 641.5Z" fill="#c0c0c0"/><circle cx="1215" cy="641.5" r="3" fill="#333"/><circle cx="1215.8" cy="640.7" r="0.9" fill="#bbb"/>
<path d="M1234.5 585.5H1265.5V603.5H1252.5V616.5H1234.5Z" fill="#00b2ef" stroke="#111" stroke-width="1.4"/>
<path d="M1232.5 593V584.5H1243M1257 584.5H1267.5V593M1267.5 609V619.5H1257M1243 619.5H1232.5V609" fill="none" stroke="#f0f0f0" stroke-width="1.2"/>
<rect x="1256.5" y="607.5" width="8" height="8" fill="none" stroke="#bfbfbf"/><circle cx="1256.5" cy="607.5" r="1.3" fill="#586579" stroke="#bfbfbf" stroke-width="0.8"/><circle cx="1264.5" cy="607.5" r="1.3" fill="#586579" stroke="#bfbfbf" stroke-width="0.8"/><circle cx="1256.5" cy="615.5" r="1.3" fill="#586579" stroke="#bfbfbf" stroke-width="0.8"/><circle cx="1264.5" cy="615.5" r="1.3" fill="#586579" stroke="#bfbfbf" stroke-width="0.8"/>
<rect x="1234.5" y="625.5" width="31" height="31" fill="#fff" stroke="#1e1e1e"/>
<path d="M1398.5 640V637.5A3 3 0 0 1 1404.5 637.5V640" fill="none" stroke="#a8a8a8" stroke-width="1.5"/><rect x="1397.5" y="640.5" width="9" height="7" fill="none" stroke="#a8a8a8"/><rect x="1401" y="643" width="1.5" height="2.5" fill="#a8a8a8"/>
<rect x="1236.5" y="855.5" width="7" height="5" rx="2.5" fill="none" stroke="#a8a8a8" stroke-width="1.5"/><rect x="1242.5" y="855.5" width="7" height="5" rx="2.5" fill="none" stroke="#a8a8a8" stroke-width="1.5"/>
</svg>
<div class="t" style="left:1264px;top:852px;font:italic 15px 'Liberation Serif',serif;color:#c8c8c8">fx</div>
<svg style="left:0;top:0" width="1440" height="867"><path d="M1279 865H1283L1281 867Z" fill="#ddd"/><rect x="1290" y="855" width="14" height="11" fill="#c8c8c8"/><circle cx="1297" cy="860.5" r="2.3" fill="#535353"/><circle cx="1324" cy="859.5" r="5" fill="#c8c8c8"/><path d="M1321 862.5L1327 856.5" stroke="#535353" stroke-width="1.2"/><path d="M1331 865H1335L1333 867Z" fill="#ddd"/><path d="M1344 856H1349L1350.5 857.5H1357V866H1344Z" fill="#c8c8c8"/></svg>
<svg style="left:1372px;top:855px" width="12" height="12"><path d="M2 0H11V11H4V9H2Z" fill="#cfcfcf"/><path d="M0.5 9.5H3.5V11.5" fill="none" stroke="#cfcfcf"/><path d="M1 9L3.5 11.5" stroke="#cfcfcf"/></svg>
<svg style="left:1398px;top:855px" width="12" height="12"><rect x="0" y="2" width="12" height="1.6" fill="#c8c8c8"/><rect x="4" y="0" width="4" height="2" fill="none" stroke="#c8c8c8" stroke-width="1"/><path d="M1.5 4.5H10.5L10 12H2Z" fill="#c8c8c8"/><path d="M4 5.5V11M6 5.5V11M8 5.5V11" stroke="#535353" stroke-width="0.8"/></svg>
</body></html>
